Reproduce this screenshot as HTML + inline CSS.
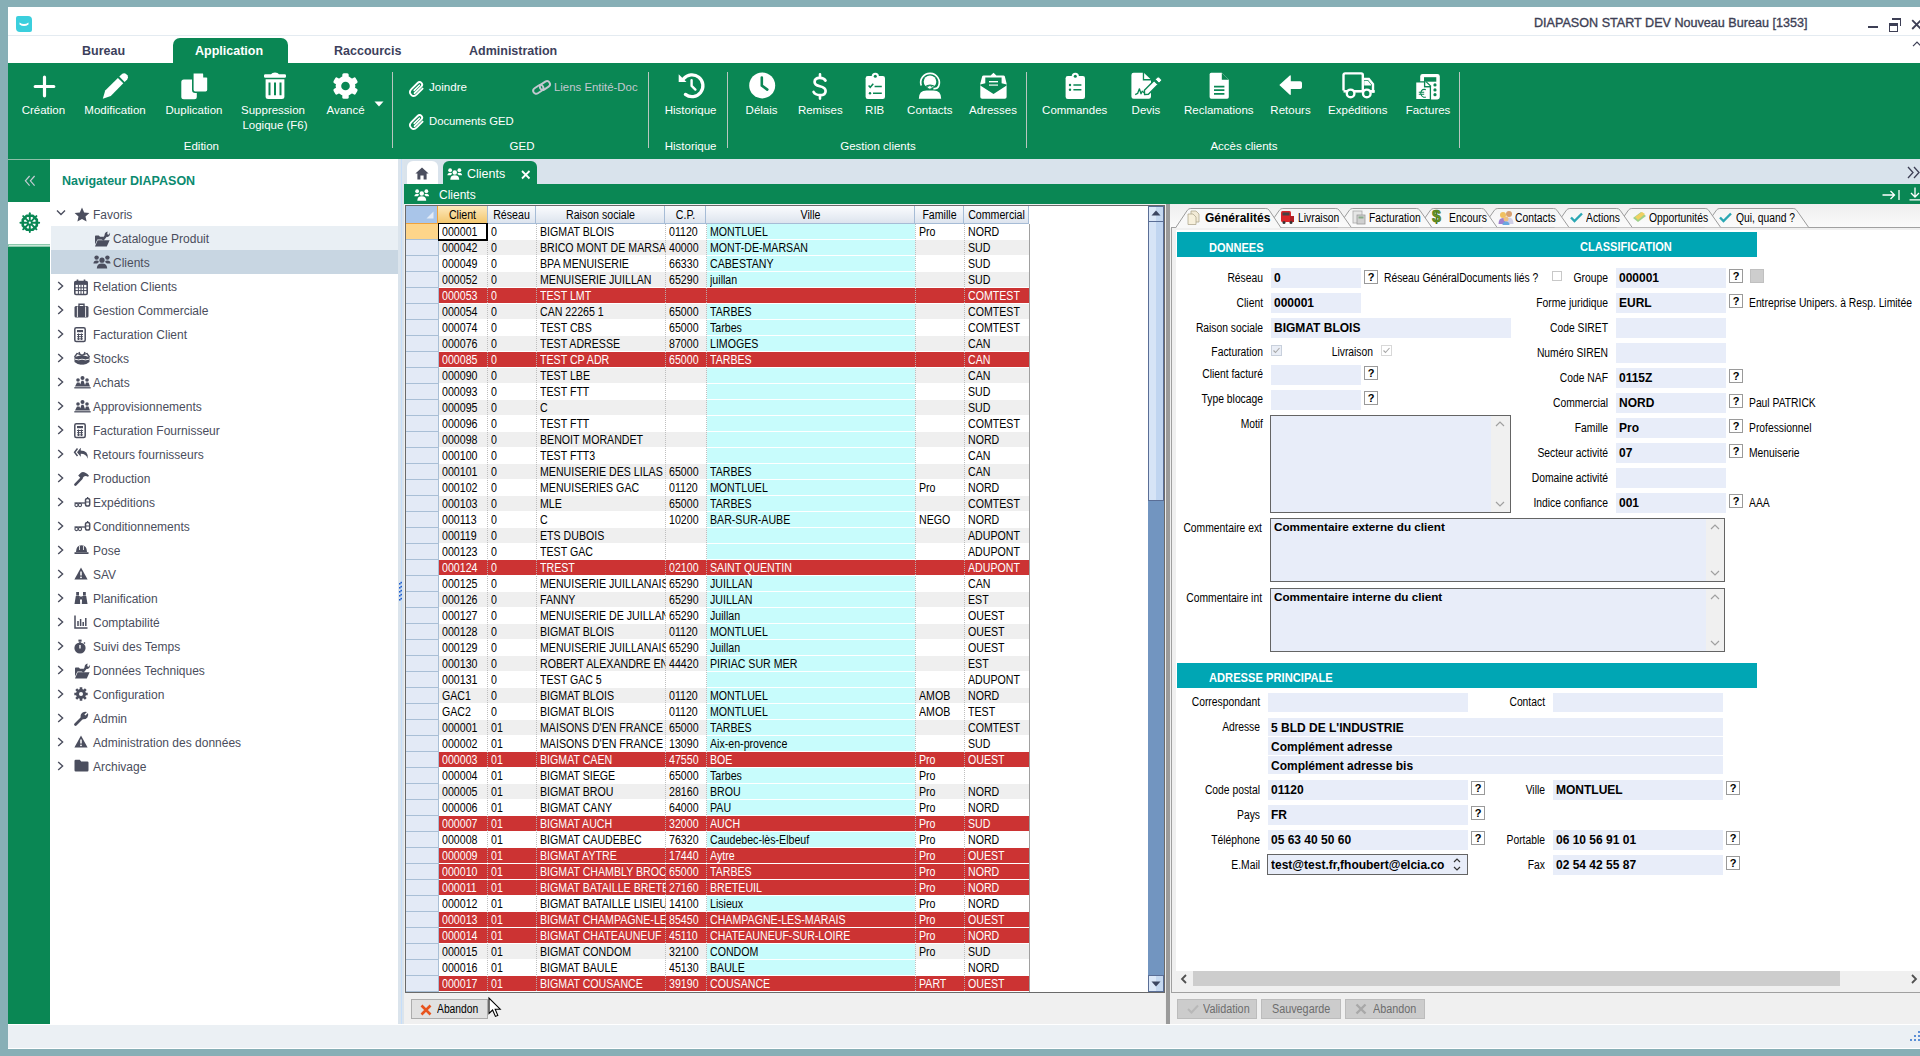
<!DOCTYPE html>
<html><head><meta charset="utf-8"><style>
*{box-sizing:border-box;margin:0;padding:0}
html,body{width:1920px;height:1056px;overflow:hidden;background:#87afb6;font-family:"Liberation Sans",sans-serif}
.a{position:absolute}
.t{position:absolute;white-space:nowrap;line-height:1}
svg{position:absolute;overflow:visible}
.rl{position:absolute;color:#fff;font-size:11.5px;white-space:nowrap;line-height:14px;text-align:center}
.gl{position:absolute;color:#fff;font-size:11.5px;white-space:nowrap;line-height:14px;text-align:center}
.sep{position:absolute;top:72px;width:1px;height:76px;background:#b9c6bf}
.nv{position:absolute;font-size:12px;color:#4a4d5c;white-space:nowrap;line-height:14px}
.g{font-size:12px;color:#000;white-space:nowrap;line-height:16px;transform:scaleX(.86);transform-origin:0 50%}
.gg{transform:scaleX(.885)}
.gr{transform-origin:100% 50%}
.gc{transform-origin:50% 50%}
.gb{font-size:12px;font-weight:bold;color:#000;white-space:nowrap;line-height:16px}
</style></head><body>
<div class="a" style="left:8px;top:7px;width:1912px;height:1042px;background:#fff"></div>
<div class="a" style="left:8px;top:35px;width:1912px;height:1px;background:#e4ebf1"></div>
<div class="a" style="left:16px;top:16px;width:16px;height:16px;background:#3bcfdd;border-radius:2px 4px 2px 4px"></div>
<svg style="left:16px;top:16px" width="16" height="16"><path d="M3.5 6.5 Q8 9.5 12.5 6.5 L12.5 8.5 Q8 11.5 3.5 8.5Z" fill="#fff"/></svg>
<div class="t" style="left:1534px;top:17px;font-size:12.6px;color:#3d3f55;-webkit-text-stroke:0.35px #3d3f55">DIAPASON START DEV Nouveau Bureau [1353]</div>
<div class="a" style="left:1868px;top:26px;width:10px;height:2px;background:#3d3f55"></div>
<div class="a" style="left:1889px;top:23px;width:9px;height:9px;border:1px solid #3d3f55;border-top-width:3px"></div>
<div class="a" style="left:1892px;top:18px;width:9px;height:2px;background:#3d3f55"></div>
<div class="a" style="left:1900px;top:18px;width:1px;height:8px;background:#3d3f55"></div>
<svg style="left:1911px;top:19px" width="12" height="12" viewBox="0 0 12 12"><path d="M1.2 1.2L10 10M10 1.2L1.2 10" stroke="#3d3f55" stroke-width="1.8"/></svg>
<svg style="left:1912px;top:40px" width="10" height="8" viewBox="0 0 10 8"><path d="M1 6.2L5 2L9 6.2" fill="none" stroke="#3d3f55" stroke-width="1.2"/></svg>
<div class="a" style="left:173px;top:38px;width:115px;height:25px;background:#0a8754;border-radius:7px 7px 0 0"></div>
<div class="t" style="left:82px;top:45px;font-size:12.5px;font-weight:bold;color:#3d3f5c">Bureau</div>
<div class="t" style="left:195px;top:45px;font-size:12.5px;font-weight:bold;color:#fff">Application</div>
<div class="t" style="left:334px;top:45px;font-size:12.5px;font-weight:bold;color:#3d3f5c">Raccourcis</div>
<div class="t" style="left:469px;top:45px;font-size:12.5px;font-weight:bold;color:#3d3f5c">Administration</div>
<div class="a" style="left:8px;top:63px;width:1912px;height:96px;background:#0a8754"></div>
<div class="rl" style="left:-16.6px;top:103px;width:120px">Création</div>
<div class="rl" style="left:55.0px;top:103px;width:120px">Modification</div>
<div class="rl" style="left:134.0px;top:103px;width:120px">Duplication</div>
<div class="rl" style="left:285.6px;top:103px;width:120px">Avancé</div>
<div class="rl" style="left:630.6px;top:103px;width:120px">Historique</div>
<div class="rl" style="left:701.6px;top:103px;width:120px">Délais</div>
<div class="rl" style="left:760.3px;top:103px;width:120px">Remises</div>
<div class="rl" style="left:814.7px;top:103px;width:120px">RIB</div>
<div class="rl" style="left:869.8px;top:103px;width:120px">Contacts</div>
<div class="rl" style="left:933.0px;top:103px;width:120px">Adresses</div>
<div class="rl" style="left:1014.7px;top:103px;width:120px">Commandes</div>
<div class="rl" style="left:1086.0px;top:103px;width:120px">Devis</div>
<div class="rl" style="left:1158.8px;top:103px;width:120px">Reclamations</div>
<div class="rl" style="left:1230.5px;top:103px;width:120px">Retours</div>
<div class="rl" style="left:1297.8px;top:103px;width:120px">Expéditions</div>
<div class="rl" style="left:1368.0px;top:103px;width:120px">Factures</div>
<div class="rl" style="left:213px;top:103px;width:120px">Suppression</div>
<div class="rl" style="left:215px;top:118px;width:120px">Logique (F6)</div>
<div class="gl" style="left:141.4px;top:139px;width:120px">Edition</div>
<div class="gl" style="left:462.0px;top:139px;width:120px">GED</div>
<div class="gl" style="left:630.6px;top:139px;width:120px">Historique</div>
<div class="gl" style="left:818.0px;top:139px;width:120px">Gestion clients</div>
<div class="gl" style="left:1184.0px;top:139px;width:120px">Accès clients</div>
<div class="sep" style="left:392px"></div>
<div class="sep" style="left:648px"></div>
<div class="sep" style="left:727px"></div>
<div class="sep" style="left:1026px"></div>
<div class="sep" style="left:1459px"></div>
<div class="t" style="left:429px;top:80px;font-size:11.6px;color:#fff;line-height:14px">Joindre</div>
<div class="t" style="left:429px;top:114px;font-size:11.3px;color:#fff;line-height:14px">Documents GED</div>
<div class="t" style="left:554px;top:80px;font-size:11.4px;color:#c4c8d0;line-height:14px">Liens Entité-Doc</div>
<svg style="left:33px;top:75px" width="23" height="23" viewBox="0 0 23 23"><path d="M11.5 2.2V20.8M2.2 11.5H20.8" stroke="#fff" stroke-width="3.2" stroke-linecap="round"/></svg>
<svg style="left:102px;top:73px" width="27" height="27" viewBox="0 0 27 27"><path d="M0.8 25.8 L3.2 17.6 L15.9 4.9 L21.3 10.3 L8.8 23 Z" fill="#fff"/><path d="M17.3 3.5 L20.3 0.8 Q22.4 -0.6 24.6 1.4 L25.4 2.3 Q26.9 4.2 25.2 6.4 L22.6 9 Z" fill="#fff"/></svg>
<svg style="left:181px;top:72px" width="28" height="28" viewBox="0 0 28 28"><rect x="0.3" y="7.5" width="15.5" height="19.8" rx="2.5" fill="#fff"/><path d="M11.8 0.6 H22.2 L27 5.4 V17.8 Q27 20.2 24.6 20.2 H14.2 Q11.8 20.2 11.8 17.8 Z" fill="#fff" stroke="#0a8754" stroke-width="1.6"/><path d="M22.2 0.6 V5.4 H27" fill="#0a8754"/></svg>
<svg style="left:263px;top:72px" width="24" height="28" viewBox="0 0 24 28"><path d="M1 3.5 Q1 2.2 2.3 2.2 H8 Q9 0.5 12 0.5 Q15 0.5 16 2.2 H21.7 Q23 2.2 23 3.5 V4.6 Q23 5.8 21.7 5.8 H2.3 Q1 5.8 1 4.6Z" fill="#fff"/><path d="M2.6 7.2 H21.4 V24.5 Q21.4 27 18.9 27 H5.1 Q2.6 27 2.6 24.5Z" fill="#fff"/><path d="M6.5 10.5V23.2M12 10.5V23.2M17.5 10.5V23.2" stroke="#0a8754" stroke-width="2"/></svg>
<svg style="left:333px;top:73px" width="26" height="26" viewBox="0 0 26 26"><circle cx="12.5" cy="13" r="9.9" fill="#fff"/><rect x="9.3" y="0.2" width="6.4" height="8" rx="1.6" transform="rotate(0 12.5 13)" fill="#fff"/><rect x="9.3" y="0.2" width="6.4" height="8" rx="1.6" transform="rotate(60 12.5 13)" fill="#fff"/><rect x="9.3" y="0.2" width="6.4" height="8" rx="1.6" transform="rotate(120 12.5 13)" fill="#fff"/><rect x="9.3" y="0.2" width="6.4" height="8" rx="1.6" transform="rotate(180 12.5 13)" fill="#fff"/><rect x="9.3" y="0.2" width="6.4" height="8" rx="1.6" transform="rotate(240 12.5 13)" fill="#fff"/><rect x="9.3" y="0.2" width="6.4" height="8" rx="1.6" transform="rotate(300 12.5 13)" fill="#fff"/><circle cx="12.5" cy="13" r="4.3" fill="#0a8754"/></svg>
<svg style="left:374px;top:101px" width="10" height="6" viewBox="0 0 10 6"><path d="M0.5 0.5H9.5L5 5.5Z" fill="#fff"/></svg>
<svg style="left:409px;top:80px" width="16" height="17" viewBox="0 0 16 17"><path d="M5.6 13.2 L12.2 6.6 Q14.2 4.6 12.4 2.8 Q10.6 1 8.6 3 L2.4 9.2 Q-0.6 12.2 2.2 14.8 Q4.8 17.4 7.8 14.4 L13.6 8.6" fill="none" stroke="#fff" stroke-width="1.9" stroke-linecap="round"/><path d="M5.2 10.4 L10.4 5.2" stroke="#fff" stroke-width="1.6" stroke-linecap="round"/></svg>
<svg style="left:409px;top:113px" width="16" height="17" viewBox="0 0 16 17"><path d="M5.6 13.2 L12.2 6.6 Q14.2 4.6 12.4 2.8 Q10.6 1 8.6 3 L2.4 9.2 Q-0.6 12.2 2.2 14.8 Q4.8 17.4 7.8 14.4 L13.6 8.6" fill="none" stroke="#fff" stroke-width="1.9" stroke-linecap="round"/><path d="M5.2 10.4 L10.4 5.2" stroke="#fff" stroke-width="1.6" stroke-linecap="round"/></svg>
<svg style="left:532px;top:80px" width="20" height="16" viewBox="0 0 20 16"><g fill="none" stroke="#c4c8d0" stroke-width="1.9"><rect x="0.8" y="6.4" width="11" height="6" rx="3" transform="rotate(-34 6.3 9.4)"/><rect x="7.4" y="2.5" width="11" height="6" rx="3" transform="rotate(-34 12.9 5.5)"/></g></svg>
<svg style="left:677px;top:72px" width="28" height="28" viewBox="0 0 28 28"><path d="M6.6 6.8 A10.9 10.9 0 1 1 8.4 22.4" fill="none" stroke="#fff" stroke-width="3.3" stroke-linecap="round"/><path d="M1.7 2.2 L1.7 10 L9.5 10 Z" fill="#fff"/><path d="M14.6 8.2 V13.8 L18.4 17.6" fill="none" stroke="#fff" stroke-width="2.4" stroke-linecap="round" stroke-linejoin="round"/></svg>
<svg style="left:749px;top:72px" width="27" height="27" viewBox="0 0 27 27"><circle cx="13.2" cy="13.4" r="13" fill="#fff"/><path d="M12.8 5.5 V13.6 L18.3 17.6" fill="none" stroke="#0a8754" stroke-width="2.6" stroke-linecap="round"/></svg>
<svg style="left:811px;top:73px" width="18" height="27" viewBox="0 0 18 27"><path d="M14.5 7.6 Q13.2 4.8 8.8 4.8 Q3.6 4.8 3.6 9 Q3.6 12 8.8 13.2 Q14.6 14.5 14.6 17.9 Q14.6 22.1 9 22.1 Q4.2 22.1 2.6 19" fill="none" stroke="#fff" stroke-width="2.7" stroke-linecap="round"/><path d="M9 1.2V4.6M9 22.4V25.6" stroke="#fff" stroke-width="2.6" stroke-linecap="round"/></svg>
<svg style="left:865px;top:72px" width="21" height="28" viewBox="0 0 21 28"><rect x="0.6" y="4" width="19.4" height="23" rx="2.2" fill="#fff"/><circle cx="10.3" cy="4.3" r="3.6" fill="#fff"/><circle cx="10.3" cy="4.2" r="1.5" fill="#0a8754"/><path d="M3.6 13.6 L5.2 15.3 L8.3 11.8" fill="none" stroke="#0a8754" stroke-width="1.5"/><path d="M9.6 14.5 H16.8 M8 21.2 H16.8" stroke="#0a8754" stroke-width="1.6"/><circle cx="5" cy="21.2" r="1.2" fill="#0a8754"/></svg>
<svg style="left:918px;top:72px" width="24" height="28" viewBox="0 0 24 28"><path d="M3.2 13.6 A9.3 9.3 0 1 1 20.6 14.2 Q19.4 17.2 15.4 16.6" fill="none" stroke="#fff" stroke-width="1.7"/><circle cx="12" cy="9.8" r="6.3" fill="#fff"/><path d="M7.2 14.8 Q12 11.6 16.8 14.6" fill="none" stroke="#0a8754" stroke-width="1.3"/><ellipse cx="11.8" cy="15.4" rx="2.4" ry="1.8" fill="#fff" stroke="#0a8754" stroke-width="1"/><path d="M0.8 26.8 Q0.8 18.4 8.5 18.4 H15.5 Q23.2 18.4 23.2 26.8 Z" fill="#fff"/></svg>
<svg style="left:979px;top:72px" width="29" height="28" viewBox="0 0 29 28"><path d="M1.3 11.5 L3.2 4.2 Q3.6 3.5 4.5 3.5 H11.6 L14.5 0.8 L17.4 3.5 H24.5 Q25.4 3.5 25.8 4.2 L27.6 11.5 V25 Q27.6 26.8 25.8 26.8 H3.1 Q1.3 26.8 1.3 25 Z" fill="#fff"/><path d="M6.3 5.6 H22.6 V11.2 L27.6 12.6 V13.4 L14.5 22 L1.3 13.4 V12.6 L6.3 11.2 Z" fill="#0a8754"/><path d="M3 12.2 L6.3 9.6 M26 12.2 L22.6 9.6" stroke="#fff" stroke-width="0"/><rect x="10" y="9" width="9" height="1.4" fill="#fff"/><rect x="10" y="12.4" width="9" height="1.4" fill="#d8ebe2"/></svg>
<svg style="left:1065px;top:72px" width="21" height="28" viewBox="0 0 21 28"><rect x="0.6" y="4" width="19.4" height="23" rx="2.2" fill="#fff"/><circle cx="10.3" cy="4.3" r="3.6" fill="#fff"/><circle cx="10.3" cy="4.2" r="1.5" fill="#0a8754"/><circle cx="5" cy="13" r="1.2" fill="#0a8754"/><circle cx="5" cy="17.8" r="1.2" fill="#0a8754"/><path d="M8.4 13 H16.4 M8.4 17.8 H16.4" stroke="#0a8754" stroke-width="1.6"/></svg>
<svg style="left:1131px;top:72px" width="32" height="28" viewBox="0 0 32 28"><path d="M0.4 3 Q0.4 0.8 2.6 0.8 H11.8 V8.6 H20 V24.6 Q20 26.8 17.8 26.8 H2.6 Q0.4 26.8 0.4 24.6 Z" fill="#fff"/><path d="M13.1 1 L19.4 7.1 H13.1 Z" fill="#fff"/><path d="M4.2 22.6 L6.6 21.4 L8.4 16.8 L10 21.8 L11.2 19.2 L12.6 20.2 L14.4 21.8" fill="none" stroke="#0a8754" stroke-width="1.3" stroke-linejoin="round"/><path d="M13.4 18.3 L23.1 8.6 L27.1 12.6 L17.4 22.3 L13.6 22.6 Z" fill="#fff" stroke="#0a8754" stroke-width="1.4" stroke-linejoin="round"/><path d="M24.2 7.4 L26.4 5.2 Q27.2 4.4 28 5.2 L30.2 7.4 Q31 8.2 30.2 9 L28 11.2 Z" fill="#fff" stroke="#0a8754" stroke-width="1"/></svg>
<svg style="left:1209px;top:72px" width="21" height="28" viewBox="0 0 21 28"><path d="M0.6 2.4 Q0.6 0.8 2.2 0.8 H12.8 L19.8 7.8 V25 Q19.8 26.7 18.2 26.7 H2.2 Q0.6 26.7 0.6 25Z" fill="#fff"/><path d="M12.8 0.8 V7.8 H19.8" fill="#0a8754"/><path d="M5 14.6 H15.4 M5 18.2 H15.4 M5 21.8 H15.4" stroke="#0a8754" stroke-width="1.7"/></svg>
<svg style="left:1279px;top:75px" width="24" height="21" viewBox="0 0 24 21"><path d="M0.3 10 L10.8 0.4 Q11.8 -0.4 11.8 1.2 V6.3 H21.2 Q23 6.3 23 8 V12.3 Q23 14 21.2 14 H11.8 V19 Q11.8 20.6 10.8 19.8 Z" fill="#fff"/></svg>
<svg style="left:1342px;top:72px" width="34" height="28" viewBox="0 0 34 28"><path d="M1.5 18.5 V3 Q1.5 1.4 3.1 1.4 H19.2 Q20.8 1.4 20.8 3 V18.5" fill="none" stroke="#fff" stroke-width="2.4"/><path d="M20.8 7 H26.8 L31 12.2 V19.5 H32.6" fill="none" stroke="#fff" stroke-width="2.4"/><path d="M22.2 9 H26 L29 12.6 V13.6 H22.2Z" fill="#fff"/><path d="M1.5 18 H32.5 V20.6 H1.5Z" fill="#fff"/><circle cx="8.6" cy="21.4" r="3.8" fill="#0a8754" stroke="#fff" stroke-width="2.4"/><circle cx="24.8" cy="21.4" r="3.8" fill="#0a8754" stroke="#fff" stroke-width="2.4"/></svg>
<svg style="left:1415px;top:73px" width="26" height="28" viewBox="0 0 26 28"><rect x="5.2" y="1" width="19.6" height="25.5" rx="2.4" fill="#fff"/><rect x="9" y="4.2" width="12.3" height="4.5" fill="#0a8754"/><path d="M0.6 8.9 H9.6 V13.6 H15.4 V26.7 H0.6 Z" fill="#fff" stroke="#0a8754" stroke-width="1.3"/><path d="M10.3 9.4 L14.6 13 H10.3 Z" fill="#fff"/><path d="M11 8.6 L16 13.4" stroke="#0a8754" stroke-width="1.3"/><path d="M9.6 8.4 V13.6 H15.6" fill="none" stroke="#0a8754" stroke-width="1.2"/><circle cx="20" cy="11.9" r="1.6" fill="#0a8754"/><circle cx="20" cy="16.9" r="1.6" fill="#0a8754"/><circle cx="20" cy="21.7" r="1.6" fill="#0a8754"/><path d="M10.8 16.6 Q8 15.8 6.6 17.6 Q5.4 19.4 5.8 21.2 Q6.4 23.6 8.6 24.2 Q9.8 24.5 10.8 24 M3.8 19.2 H9.2 M3.8 21.2 H9.2" fill="none" stroke="#0a8754" stroke-width="1.1"/></svg>
<div class="a" style="left:8px;top:159px;width:42px;height:865px;background:#0a8754"></div>
<div class="a" style="left:8px;top:159px;width:42px;height:1px;background:#8fbfa8"></div>
<div class="a" style="left:8px;top:202px;width:42px;height:42px;background:#fff"></div>
<div class="a" style="left:8px;top:244px;width:42px;height:3px;background:#8cc8ac"></div>
<div class="a" style="left:9px;top:245px;width:41px;height:1px;background:#c8e8d8"></div>
<svg style="left:24px;top:175px" width="12" height="12" viewBox="0 0 12 12"><path d="M5.6 1 L1.4 5.8 L5.6 10.6 M10.6 1 L6.4 5.8 L10.6 10.6" fill="none" stroke="#c5ccd4" stroke-width="1.2"/></svg>
<svg style="left:19px;top:212px" width="21" height="21" viewBox="0 0 21 21"><polygon points="17.82,13.61 13.71,17.72 7.89,17.72 3.78,13.61 3.78,7.79 7.89,3.68 13.71,3.68 17.82,7.79" fill="none" stroke="#0a8754" stroke-width="2.6" stroke-linejoin="round"/><path d="M12.30 10.70 L20.20 10.70" stroke="#0a8754" stroke-width="1.9" stroke-linecap="round"/><path d="M11.86 11.76 L17.45 17.35" stroke="#0a8754" stroke-width="1.9" stroke-linecap="round"/><path d="M10.80 12.20 L10.80 20.10" stroke="#0a8754" stroke-width="1.9" stroke-linecap="round"/><path d="M9.74 11.76 L4.15 17.35" stroke="#0a8754" stroke-width="1.9" stroke-linecap="round"/><path d="M9.30 10.70 L1.40 10.70" stroke="#0a8754" stroke-width="1.9" stroke-linecap="round"/><path d="M9.74 9.64 L4.15 4.05" stroke="#0a8754" stroke-width="1.9" stroke-linecap="round"/><path d="M10.80 9.20 L10.80 1.30" stroke="#0a8754" stroke-width="1.9" stroke-linecap="round"/><path d="M11.86 9.64 L17.45 4.05" stroke="#0a8754" stroke-width="1.9" stroke-linecap="round"/><circle cx="10.8" cy="10.7" r="2.8" fill="#0a8754"/><circle cx="10.8" cy="10.7" r="1.1" fill="#fff"/></svg>
<div class="t" style="left:62px;top:174px;font-size:12.5px;font-weight:bold;color:#0b8a70;line-height:14px">Navigateur DIAPASON</div>
<div class="a" style="left:51px;top:226px;width:347px;height:24px;background:#e9eff4"></div>
<div class="a" style="left:51px;top:250px;width:347px;height:24px;background:#c8d6e2"></div>
<svg style="left:74px;top:207px" width="16" height="16" viewBox="0 0 16 16"><path d="M8 0.6 L10.2 5.4 L15.4 5.9 L11.5 9.4 L12.6 14.6 L8 12 L3.4 14.6 L4.5 9.4 L0.6 5.9 L5.8 5.4Z" fill="#4b4e5e"/></svg>
<svg style="left:56px;top:209px" width="10" height="8" viewBox="0 0 10 8"><path d="M1 1.5 L5 5.5 L9 1.5" fill="none" stroke="#4b4e5e" stroke-width="1.4"/></svg>
<div class="nv" style="left:93px;top:208px">Favoris</div>
<svg style="left:94px;top:231px" width="17" height="16" viewBox="0 0 17 16"><path d="M1 5.4 Q1 4.6 1.8 4.6 H4.8 L6 5.8 H9.6 V8.4 H3.4 L1 13.6 Z" fill="#4b4e5e"/><path d="M3.6 9.2 H15.6 L12.8 15.4 H1 Z" fill="#4b4e5e"/><path d="M8.6 9 L12.2 4.6" stroke="#4b4e5e" stroke-width="2.4"/><path d="M10.8 5.2 Q10 2.4 12.4 1 L13.6 0.4 L13.2 3.2 L15 3.8 L16 1.6 Q16.6 4.8 13.6 6 Z" fill="#4b4e5e"/></svg>
<div class="nv" style="left:113px;top:232px">Catalogue Produit</div>
<svg style="left:93px;top:255px" width="18" height="14" viewBox="0 0 18 14"><circle cx="3.6" cy="2.6" r="2.2" fill="#4b4e5e"/><circle cx="14.4" cy="2.6" r="2.2" fill="#4b4e5e"/><circle cx="9" cy="5.2" r="2.6" fill="#4b4e5e"/><path d="M0.4 8.6 Q0.6 5.6 3.6 5.6 Q5.6 5.6 6 7 Q4.2 8.2 4.2 8.6Z M17.6 8.6 Q17.4 5.6 14.4 5.6 Q12.4 5.6 12 7 Q13.8 8.2 13.8 8.6Z" fill="#4b4e5e"/><path d="M3.8 13.6 Q3.8 8.4 9 8.4 Q14.2 8.4 14.2 13.6Z" fill="#4b4e5e"/></svg>
<div class="nv" style="left:113px;top:256px">Clients</div>
<svg style="left:74px;top:279px" width="14" height="16" viewBox="0 0 14 16"><rect x="0.8" y="2.5" width="12.4" height="13" rx="1.2" fill="none" stroke="#4b4e5e" stroke-width="1.6"/><rect x="0.8" y="2.5" width="12.4" height="3.4" fill="#4b4e5e"/><path d="M3.5 0.5V3.5M10.5 0.5V3.5" stroke="#4b4e5e" stroke-width="1.6"/><path d="M1 8.8H13M1 11.6H13M4.4 6V15.5M7 6V15.5M9.6 6V15.5" stroke="#4b4e5e" stroke-width="1"/></svg>
<svg style="left:57px;top:281px" width="8" height="10" viewBox="0 0 8 10"><path d="M1.2 1 L5.6 5 L1.2 9" fill="none" stroke="#4b4e5e" stroke-width="1.4"/></svg>
<div class="nv" style="left:93px;top:280px">Relation Clients</div>
<svg style="left:74px;top:303px" width="15" height="15" viewBox="0 0 15 15"><rect x="0.5" y="3" width="14" height="11.5" rx="1.5" fill="#4b4e5e"/><path d="M5 3V1.2H10V3" fill="none" stroke="#4b4e5e" stroke-width="1.4"/><path d="M3.4 3.5V14M11.6 3.5V14" stroke="#fff" stroke-width="0.9"/></svg>
<svg style="left:57px;top:305px" width="8" height="10" viewBox="0 0 8 10"><path d="M1.2 1 L5.6 5 L1.2 9" fill="none" stroke="#4b4e5e" stroke-width="1.4"/></svg>
<div class="nv" style="left:93px;top:304px">Gestion Commerciale</div>
<svg style="left:74px;top:327px" width="12" height="15" viewBox="0 0 12 15"><rect x="0.8" y="0.8" width="10.4" height="13.6" rx="1.5" fill="none" stroke="#4b4e5e" stroke-width="1.5"/><rect x="3" y="3" width="6" height="2.2" fill="#4b4e5e"/><path d="M3 7.5H9M3 9.7H9M3 11.9H9M4.5 6.5V13M7.5 6.5V13" stroke="#4b4e5e" stroke-width="1"/></svg>
<svg style="left:57px;top:329px" width="8" height="10" viewBox="0 0 8 10"><path d="M1.2 1 L5.6 5 L1.2 9" fill="none" stroke="#4b4e5e" stroke-width="1.4"/></svg>
<div class="nv" style="left:93px;top:328px">Facturation Client</div>
<svg style="left:74px;top:351px" width="16" height="14" viewBox="0 0 16 14"><path d="M0.5 6 L8 4 L15.5 6 L15.5 11 Q12 14 8 13.6 Q4 14 0.5 11Z" fill="#4b4e5e"/><path d="M0.5 6 L3 2.5 L8 4 L13 2.5 L15.5 6" fill="none" stroke="#4b4e5e" stroke-width="1.3"/><path d="M5 1 L6 3.5 M11 1 L10 3.5" stroke="#4b4e5e" stroke-width="1.4"/><path d="M1 8.2 Q4.5 9.5 8 8.2 Q11.5 9.5 15 8.2" stroke="#fff" stroke-width="0.9" fill="none"/></svg>
<svg style="left:57px;top:353px" width="8" height="10" viewBox="0 0 8 10"><path d="M1.2 1 L5.6 5 L1.2 9" fill="none" stroke="#4b4e5e" stroke-width="1.4"/></svg>
<div class="nv" style="left:93px;top:352px">Stocks</div>
<svg style="left:74px;top:375px" width="17" height="14" viewBox="0 0 17 14"><circle cx="4" cy="5" r="1.8" fill="#4b4e5e"/><circle cx="8.5" cy="3" r="2" fill="#4b4e5e"/><circle cx="13" cy="5" r="1.8" fill="#4b4e5e"/><path d="M1 11.5 L3 7.5 L5.5 7.5 L7 11.5Z M5.5 11.5 L7.5 5.8 L9.5 5.8 L11.5 11.5Z M10.5 11.5 L12 7.5 L14.5 7.5 L16 11.5Z" fill="#4b4e5e"/><path d="M0.3 12.8H16.7" stroke="#4b4e5e" stroke-width="1.3"/></svg>
<svg style="left:57px;top:377px" width="8" height="10" viewBox="0 0 8 10"><path d="M1.2 1 L5.6 5 L1.2 9" fill="none" stroke="#4b4e5e" stroke-width="1.4"/></svg>
<div class="nv" style="left:93px;top:376px">Achats</div>
<svg style="left:74px;top:399px" width="17" height="14" viewBox="0 0 17 14"><circle cx="4" cy="5" r="1.8" fill="#4b4e5e"/><circle cx="8.5" cy="3" r="2" fill="#4b4e5e"/><circle cx="13" cy="5" r="1.8" fill="#4b4e5e"/><path d="M1 11.5 L3 7.5 L5.5 7.5 L7 11.5Z M5.5 11.5 L7.5 5.8 L9.5 5.8 L11.5 11.5Z M10.5 11.5 L12 7.5 L14.5 7.5 L16 11.5Z" fill="#4b4e5e"/><path d="M0.3 12.8H16.7" stroke="#4b4e5e" stroke-width="1.3"/></svg>
<svg style="left:57px;top:401px" width="8" height="10" viewBox="0 0 8 10"><path d="M1.2 1 L5.6 5 L1.2 9" fill="none" stroke="#4b4e5e" stroke-width="1.4"/></svg>
<div class="nv" style="left:93px;top:400px">Approvisionnements</div>
<svg style="left:74px;top:423px" width="12" height="15" viewBox="0 0 12 15"><rect x="0.8" y="0.8" width="10.4" height="13.6" rx="1.5" fill="none" stroke="#4b4e5e" stroke-width="1.5"/><rect x="3" y="3" width="6" height="2.2" fill="#4b4e5e"/><path d="M3 7.5H9M3 9.7H9M3 11.9H9M4.5 6.5V13M7.5 6.5V13" stroke="#4b4e5e" stroke-width="1"/></svg>
<svg style="left:57px;top:425px" width="8" height="10" viewBox="0 0 8 10"><path d="M1.2 1 L5.6 5 L1.2 9" fill="none" stroke="#4b4e5e" stroke-width="1.4"/></svg>
<div class="nv" style="left:93px;top:424px">Facturation Fournisseur</div>
<svg style="left:74px;top:447px" width="16" height="14" viewBox="0 0 16 14"><path d="M3.5 1.5 L0.6 5.2 L3.5 9" fill="none" stroke="#4b4e5e" stroke-width="1.5"/><path d="M6.5 1 L3 5.2 L6.5 9.4 V6.8 Q12 6.6 13.8 11.8 Q14.6 3.6 6.5 3.6Z" fill="#4b4e5e"/><path d="M6.5 1V9.4" stroke="#4b4e5e" stroke-width="0.5"/></svg>
<svg style="left:57px;top:449px" width="8" height="10" viewBox="0 0 8 10"><path d="M1.2 1 L5.6 5 L1.2 9" fill="none" stroke="#4b4e5e" stroke-width="1.4"/></svg>
<div class="nv" style="left:93px;top:448px">Retours fournisseurs</div>
<svg style="left:74px;top:471px" width="16" height="15" viewBox="0 0 16 15"><path d="M1.4 13.6 L7.4 7.4" stroke="#4b4e5e" stroke-width="2.6" stroke-linecap="round"/><path d="M4.2 4.6 L7.2 1.4 Q10.8 0 15 4.8 L14 5.8 Q11.6 4.4 10 5.6 L7.6 8.2 Z" fill="#4b4e5e"/></svg>
<svg style="left:57px;top:473px" width="8" height="10" viewBox="0 0 8 10"><path d="M1.2 1 L5.6 5 L1.2 9" fill="none" stroke="#4b4e5e" stroke-width="1.4"/></svg>
<div class="nv" style="left:93px;top:472px">Production</div>
<svg style="left:74px;top:495px" width="17" height="12" viewBox="0 0 17 12"><path d="M0.5 8 H11" stroke="#4b4e5e" stroke-width="1.3"/><circle cx="2.5" cy="10" r="1.6" fill="none" stroke="#4b4e5e" stroke-width="1.1"/><circle cx="6" cy="10" r="1.6" fill="none" stroke="#4b4e5e" stroke-width="1.1"/><rect x="11.5" y="3.5" width="4.2" height="7.5" rx="1.8" fill="none" stroke="#4b4e5e" stroke-width="1.5"/><path d="M11.5 7H15.7M13.6 2V3.5" stroke="#4b4e5e" stroke-width="1.2"/></svg>
<svg style="left:57px;top:497px" width="8" height="10" viewBox="0 0 8 10"><path d="M1.2 1 L5.6 5 L1.2 9" fill="none" stroke="#4b4e5e" stroke-width="1.4"/></svg>
<div class="nv" style="left:93px;top:496px">Expéditions</div>
<svg style="left:74px;top:519px" width="17" height="12" viewBox="0 0 17 12"><path d="M0.5 8 H11" stroke="#4b4e5e" stroke-width="1.3"/><circle cx="2.5" cy="10" r="1.6" fill="none" stroke="#4b4e5e" stroke-width="1.1"/><circle cx="6" cy="10" r="1.6" fill="none" stroke="#4b4e5e" stroke-width="1.1"/><rect x="11.5" y="3.5" width="4.2" height="7.5" rx="1.8" fill="none" stroke="#4b4e5e" stroke-width="1.5"/><path d="M11.5 7H15.7M13.6 2V3.5" stroke="#4b4e5e" stroke-width="1.2"/></svg>
<svg style="left:57px;top:521px" width="8" height="10" viewBox="0 0 8 10"><path d="M1.2 1 L5.6 5 L1.2 9" fill="none" stroke="#4b4e5e" stroke-width="1.4"/></svg>
<div class="nv" style="left:93px;top:520px">Conditionnements</div>
<svg style="left:74px;top:543px" width="15" height="13" viewBox="0 0 15 13"><path d="M2 9 Q2 2.5 7.5 2.2 Q13 2.5 13 9Z" fill="#4b4e5e"/><path d="M0.5 9.2 H14.5 V11 H0.5Z" fill="#4b4e5e"/><path d="M5.5 3V7M9.5 3V7" stroke="#fff" stroke-width="0.8"/></svg>
<svg style="left:57px;top:545px" width="8" height="10" viewBox="0 0 8 10"><path d="M1.2 1 L5.6 5 L1.2 9" fill="none" stroke="#4b4e5e" stroke-width="1.4"/></svg>
<div class="nv" style="left:93px;top:544px">Pose</div>
<svg style="left:74px;top:567px" width="14" height="13" viewBox="0 0 14 13"><path d="M7 0.5 L13.6 12.4 H0.4Z" fill="#4b4e5e"/><path d="M7 4.5V8.5" stroke="#fff" stroke-width="1.5"/><circle cx="7" cy="10.3" r="0.9" fill="#fff"/></svg>
<svg style="left:57px;top:569px" width="8" height="10" viewBox="0 0 8 10"><path d="M1.2 1 L5.6 5 L1.2 9" fill="none" stroke="#4b4e5e" stroke-width="1.4"/></svg>
<div class="nv" style="left:93px;top:568px">SAV</div>
<svg style="left:74px;top:591px" width="14" height="14" viewBox="0 0 14 14"><path d="M0.5 13 L1.8 5 L5.8 5 L6.2 13Z M7.8 13 L8.2 5 L12.2 5 L13.5 13Z" fill="#4b4e5e"/><rect x="2.2" y="1" width="2.8" height="3.6" fill="#4b4e5e"/><rect x="9" y="1" width="2.8" height="3.6" fill="#4b4e5e"/><rect x="6" y="5.5" width="2" height="3" fill="#4b4e5e"/></svg>
<svg style="left:57px;top:593px" width="8" height="10" viewBox="0 0 8 10"><path d="M1.2 1 L5.6 5 L1.2 9" fill="none" stroke="#4b4e5e" stroke-width="1.4"/></svg>
<div class="nv" style="left:93px;top:592px">Planification</div>
<svg style="left:74px;top:615px" width="14" height="14" viewBox="0 0 14 14"><path d="M1 0.5V13H13.5" fill="none" stroke="#4b4e5e" stroke-width="1.5"/><path d="M4 11V6M6.6 11V4M9.2 11V7M11.8 11V3" stroke="#4b4e5e" stroke-width="1.5"/></svg>
<svg style="left:57px;top:617px" width="8" height="10" viewBox="0 0 8 10"><path d="M1.2 1 L5.6 5 L1.2 9" fill="none" stroke="#4b4e5e" stroke-width="1.4"/></svg>
<div class="nv" style="left:93px;top:616px">Comptabilité</div>
<svg style="left:74px;top:639px" width="12" height="15" viewBox="0 0 12 15"><circle cx="6" cy="9" r="5.6" fill="#4b4e5e"/><rect x="4.4" y="0.6" width="3.2" height="2" fill="#4b4e5e"/><path d="M6 2.4V4M10 3.6L11 4.6" stroke="#4b4e5e" stroke-width="1.4"/><path d="M6 6V9.4" stroke="#fff" stroke-width="1.4"/></svg>
<svg style="left:57px;top:641px" width="8" height="10" viewBox="0 0 8 10"><path d="M1.2 1 L5.6 5 L1.2 9" fill="none" stroke="#4b4e5e" stroke-width="1.4"/></svg>
<div class="nv" style="left:93px;top:640px">Suivi des Temps</div>
<svg style="left:74px;top:663px" width="17" height="16" viewBox="0 0 17 16"><path d="M1 5.4 Q1 4.6 1.8 4.6 H4.8 L6 5.8 H9.6 V8.4 H3.4 L1 13.6 Z" fill="#4b4e5e"/><path d="M3.6 9.2 H15.6 L12.8 15.4 H1 Z" fill="#4b4e5e"/><path d="M8.6 9 L12.2 4.6" stroke="#4b4e5e" stroke-width="2.4"/><path d="M10.8 5.2 Q10 2.4 12.4 1 L13.6 0.4 L13.2 3.2 L15 3.8 L16 1.6 Q16.6 4.8 13.6 6 Z" fill="#4b4e5e"/></svg>
<svg style="left:57px;top:665px" width="8" height="10" viewBox="0 0 8 10"><path d="M1.2 1 L5.6 5 L1.2 9" fill="none" stroke="#4b4e5e" stroke-width="1.4"/></svg>
<div class="nv" style="left:93px;top:664px">Données Techniques</div>
<svg style="left:74px;top:687px" width="14" height="14" viewBox="0 0 14 14"><circle cx="7" cy="7" r="5" fill="#4b4e5e"/><path d="M7 0.3V13.7M0.3 7H13.7M2.2 2.2L11.8 11.8M11.8 2.2L2.2 11.8" stroke="#4b4e5e" stroke-width="2.6"/><circle cx="7" cy="7" r="2" fill="#fff"/></svg>
<svg style="left:57px;top:689px" width="8" height="10" viewBox="0 0 8 10"><path d="M1.2 1 L5.6 5 L1.2 9" fill="none" stroke="#4b4e5e" stroke-width="1.4"/></svg>
<div class="nv" style="left:93px;top:688px">Configuration</div>
<svg style="left:74px;top:711px" width="15" height="15" viewBox="0 0 15 15"><path d="M1.5 13.5 L8 7" stroke="#4b4e5e" stroke-width="2.8" stroke-linecap="round"/><path d="M7 7.5 Q5.6 3.5 8.6 1.4 Q10.8 0.2 13 1 L10.4 3.6 L11.4 4.6 L14 2 Q14.8 4.4 13.4 6.4 Q11.2 9 7.6 8Z" fill="#4b4e5e"/></svg>
<svg style="left:57px;top:713px" width="8" height="10" viewBox="0 0 8 10"><path d="M1.2 1 L5.6 5 L1.2 9" fill="none" stroke="#4b4e5e" stroke-width="1.4"/></svg>
<div class="nv" style="left:93px;top:712px">Admin</div>
<svg style="left:74px;top:735px" width="14" height="13" viewBox="0 0 14 13"><path d="M7 0.5 L13.6 12.4 H0.4Z" fill="#4b4e5e"/><path d="M7 4.5V8.5" stroke="#fff" stroke-width="1.5"/><circle cx="7" cy="10.3" r="0.9" fill="#fff"/></svg>
<svg style="left:57px;top:737px" width="8" height="10" viewBox="0 0 8 10"><path d="M1.2 1 L5.6 5 L1.2 9" fill="none" stroke="#4b4e5e" stroke-width="1.4"/></svg>
<div class="nv" style="left:93px;top:736px">Administration des données</div>
<svg style="left:74px;top:759px" width="15" height="13" viewBox="0 0 15 13"><path d="M0.5 2 Q0.5 0.8 1.7 0.8 H5.8 L7.2 2.4 H13.3 Q14.5 2.4 14.5 3.6 V11.3 Q14.5 12.5 13.3 12.5 H1.7 Q0.5 12.5 0.5 11.3Z" fill="#4b4e5e"/></svg>
<svg style="left:57px;top:761px" width="8" height="10" viewBox="0 0 8 10"><path d="M1.2 1 L5.6 5 L1.2 9" fill="none" stroke="#4b4e5e" stroke-width="1.4"/></svg>
<div class="nv" style="left:93px;top:760px">Archivage</div>
<div class="a" style="left:398px;top:159px;width:6px;height:865px;background:#dbe4ec"></div>
<div class="a" style="left:401px;top:159px;width:1px;height:865px;background:#c6defa"></div>
<div class="a" style="left:404px;top:159px;width:1516px;height:25px;background:#d9e3ec"></div>
<div class="a" style="left:407px;top:161px;width:31px;height:23px;background:#fff;border-radius:6px 6px 0 0"></div>
<svg style="left:415px;top:167px" width="14" height="13" viewBox="0 0 14 13"><path d="M7 0.5 L13.6 6.6 H11.6 V12.4 H8.6 V8.6 H5.4 V12.4 H2.4 V6.6 H0.4Z" fill="#4b4e5e"/></svg>
<div class="a" style="left:443px;top:161px;width:94px;height:23px;background:#0a8754;border-radius:6px 6px 0 0"></div>
<svg style="left:447px;top:168px" width="15.5" height="12" viewBox="0 0 18 14"><circle cx="3.6" cy="2.6" r="2.2" fill="#fff"/><circle cx="14.4" cy="2.6" r="2.2" fill="#fff"/><circle cx="9" cy="5.2" r="2.6" fill="#fff"/><path d="M0.4 8.6 Q0.6 5.6 3.6 5.6 Q5.6 5.6 6 7 Q4.2 8.2 4.2 8.6Z M17.6 8.6 Q17.4 5.6 14.4 5.6 Q12.4 5.6 12 7 Q13.8 8.2 13.8 8.6Z" fill="#fff"/><path d="M3.8 13.6 Q3.8 8.4 9 8.4 Q14.2 8.4 14.2 13.6Z" fill="#fff"/></svg>
<div class="t" style="left:467px;top:167px;font-size:12.5px;color:#fff;line-height:14px">Clients</div>
<svg style="left:521px;top:170px" width="10" height="10" viewBox="0 0 10 10"><path d="M1 1L8.5 8.5M8.5 1L1 8.5" stroke="#fff" stroke-width="1.8"/></svg>
<svg style="left:1907px;top:166px" width="14" height="13" viewBox="0 0 14 13"><path d="M1 1 L6 6.5 L1 12 M7 1 L12 6.5 L7 12" fill="none" stroke="#3d3f55" stroke-width="1.3"/></svg>
<div class="a" style="left:404px;top:184px;width:1516px;height:20px;background:#0a8754"></div>
<svg style="left:414px;top:189px" width="15.5" height="12" viewBox="0 0 18 14"><circle cx="3.6" cy="2.6" r="2.2" fill="#fff"/><circle cx="14.4" cy="2.6" r="2.2" fill="#fff"/><circle cx="9" cy="5.2" r="2.6" fill="#fff"/><path d="M0.4 8.6 Q0.6 5.6 3.6 5.6 Q5.6 5.6 6 7 Q4.2 8.2 4.2 8.6Z M17.6 8.6 Q17.4 5.6 14.4 5.6 Q12.4 5.6 12 7 Q13.8 8.2 13.8 8.6Z" fill="#fff"/><path d="M3.8 13.6 Q3.8 8.4 9 8.4 Q14.2 8.4 14.2 13.6Z" fill="#fff"/></svg>
<div class="t" style="left:439px;top:188px;font-size:12px;color:#fff;line-height:14px">Clients</div>
<svg style="left:1882px;top:189px" width="20" height="12" viewBox="0 0 20 12"><path d="M0.5 6H12.5M8.5 2L12.5 6L8.5 10M17 1V11" fill="none" stroke="#fff" stroke-width="1.3"/></svg>
<svg style="left:1909px;top:187px" width="12" height="14" viewBox="0 0 12 14"><path d="M6 0.5V10M2 6L6 10L10 6M0.5 12.8H11.5" fill="none" stroke="#fff" stroke-width="1.3"/></svg>
<div class="a" style="left:404px;top:204px;width:762px;height:820px;background:#f0f0f0"></div>
<div class="a" style="left:405px;top:205px;width:760px;height:788px;background:#fff;border:1px solid #6a6a6a"></div>
<div class="a" style="left:406px;top:206px;width:623px;height:18px;background:linear-gradient(#fbfcfe,#dde4ee);border-bottom:1px solid #a6bcd6"></div>
<div class="a" style="left:406px;top:206px;width:32px;height:18px;background:#a9c5e9;border-bottom:1px solid #f0a23a"></div>
<svg style="left:426px;top:211px" width="8" height="8" viewBox="0 0 8 8"><path d="M7.5 0.5V7.5H0.5Z" fill="#e4ebf6"/></svg>
<div class="a" style="left:438px;top:206px;width:49px;height:18px;background:linear-gradient(#fde9bd,#f3c76f);border-bottom:1px solid #f0a23a"></div>
<div class="a" style="left:487px;top:206px;width:1px;height:18px;background:#a6bcd6"></div>
<div class="g gg gc a" style="left:438px;top:207px;width:49px;text-align:center;line-height:16px">Client</div>
<div class="a" style="left:535px;top:206px;width:1px;height:18px;background:#a6bcd6"></div>
<div class="g gg gc a" style="left:487px;top:207px;width:49px;text-align:center;line-height:16px">Réseau</div>
<div class="a" style="left:664px;top:206px;width:1px;height:18px;background:#a6bcd6"></div>
<div class="g gg gc a" style="left:536px;top:207px;width:129px;text-align:center;line-height:16px">Raison sociale</div>
<div class="a" style="left:705px;top:206px;width:1px;height:18px;background:#a6bcd6"></div>
<div class="g gg gc a" style="left:665px;top:207px;width:41px;text-align:center;line-height:16px">C.P.</div>
<div class="a" style="left:914px;top:206px;width:1px;height:18px;background:#a6bcd6"></div>
<div class="g gg gc a" style="left:706px;top:207px;width:209px;text-align:center;line-height:16px">Ville</div>
<div class="a" style="left:963px;top:206px;width:1px;height:18px;background:#a6bcd6"></div>
<div class="g gg gc a" style="left:915px;top:207px;width:49px;text-align:center;line-height:16px">Famille</div>
<div class="a" style="left:1028px;top:206px;width:1px;height:18px;background:#a6bcd6"></div>
<div class="g gg gc a" style="left:964px;top:207px;width:65px;text-align:center;line-height:16px">Commercial</div>
<div class="a" style="left:437px;top:206px;width:1px;height:18px;background:#f0a23a"></div>
<div class="a" style="left:406px;top:224px;width:33px;height:16px;background:#fdd58a;border-bottom:1px solid #a9bfd6;border-right:1px solid #a9bfd6"></div>
<div class="a" style="left:439px;top:224px;width:590px;height:15px;background:#ffffff"></div>
<div class="a" style="left:707px;top:224px;width:208px;height:15px;background:#c8fcfc"></div>
<div class="g gg a" style="left:442px;top:224px;width:52.0px;overflow:hidden;color:#000">000001</div>
<div class="g gg a" style="left:491px;top:224px;width:52.0px;overflow:hidden;color:#000">0</div>
<div class="g gg a" style="left:540px;top:224px;width:142.4px;overflow:hidden;color:#000">BIGMAT BLOIS</div>
<div class="g gg a" style="left:669px;top:224px;width:42.9px;overflow:hidden;color:#000">01120</div>
<div class="g gg a" style="left:710px;top:224px;width:232.8px;overflow:hidden;color:#000">MONTLUEL</div>
<div class="g gg a" style="left:919px;top:224px;width:52.0px;overflow:hidden;color:#000">Pro</div>
<div class="g gg a" style="left:968px;top:224px;width:70.1px;overflow:hidden;color:#000">NORD</div>
<div class="a" style="left:406px;top:240px;width:33px;height:16px;background:#e3eaf6;border-bottom:1px solid #a9bfd6;border-right:1px solid #a9bfd6"></div>
<div class="a" style="left:439px;top:240px;width:590px;height:15px;background:#efefef"></div>
<div class="a" style="left:707px;top:240px;width:208px;height:15px;background:#c8fcfc"></div>
<div class="g gg a" style="left:442px;top:240px;width:52.0px;overflow:hidden;color:#000">000042</div>
<div class="g gg a" style="left:491px;top:240px;width:52.0px;overflow:hidden;color:#000">0</div>
<div class="g gg a" style="left:540px;top:240px;width:142.4px;overflow:hidden;color:#000">BRICO MONT DE MARSAN</div>
<div class="g gg a" style="left:669px;top:240px;width:42.9px;overflow:hidden;color:#000">40000</div>
<div class="g gg a" style="left:710px;top:240px;width:232.8px;overflow:hidden;color:#000">MONT-DE-MARSAN</div>
<div class="g gg a" style="left:968px;top:240px;width:70.1px;overflow:hidden;color:#000">SUD</div>
<div class="a" style="left:406px;top:256px;width:33px;height:16px;background:#e3eaf6;border-bottom:1px solid #a9bfd6;border-right:1px solid #a9bfd6"></div>
<div class="a" style="left:439px;top:256px;width:590px;height:15px;background:#ffffff"></div>
<div class="a" style="left:707px;top:256px;width:208px;height:15px;background:#c8fcfc"></div>
<div class="g gg a" style="left:442px;top:256px;width:52.0px;overflow:hidden;color:#000">000049</div>
<div class="g gg a" style="left:491px;top:256px;width:52.0px;overflow:hidden;color:#000">0</div>
<div class="g gg a" style="left:540px;top:256px;width:142.4px;overflow:hidden;color:#000">BPA MENUISERIE</div>
<div class="g gg a" style="left:669px;top:256px;width:42.9px;overflow:hidden;color:#000">66330</div>
<div class="g gg a" style="left:710px;top:256px;width:232.8px;overflow:hidden;color:#000">CABESTANY</div>
<div class="g gg a" style="left:968px;top:256px;width:70.1px;overflow:hidden;color:#000">SUD</div>
<div class="a" style="left:406px;top:272px;width:33px;height:16px;background:#e3eaf6;border-bottom:1px solid #a9bfd6;border-right:1px solid #a9bfd6"></div>
<div class="a" style="left:439px;top:272px;width:590px;height:15px;background:#efefef"></div>
<div class="a" style="left:707px;top:272px;width:208px;height:15px;background:#c8fcfc"></div>
<div class="g gg a" style="left:442px;top:272px;width:52.0px;overflow:hidden;color:#000">000052</div>
<div class="g gg a" style="left:491px;top:272px;width:52.0px;overflow:hidden;color:#000">0</div>
<div class="g gg a" style="left:540px;top:272px;width:142.4px;overflow:hidden;color:#000">MENUISERIE JUILLAN</div>
<div class="g gg a" style="left:669px;top:272px;width:42.9px;overflow:hidden;color:#000">65290</div>
<div class="g gg a" style="left:710px;top:272px;width:232.8px;overflow:hidden;color:#000">juillan</div>
<div class="g gg a" style="left:968px;top:272px;width:70.1px;overflow:hidden;color:#000">SUD</div>
<div class="a" style="left:406px;top:288px;width:33px;height:16px;background:#e3eaf6;border-bottom:1px solid #a9bfd6;border-right:1px solid #a9bfd6"></div>
<div class="a" style="left:439px;top:288px;width:590px;height:15px;background:#cc3333"></div>
<div class="g gg a" style="left:442px;top:288px;width:52.0px;overflow:hidden;color:#fff">000053</div>
<div class="g gg a" style="left:491px;top:288px;width:52.0px;overflow:hidden;color:#fff">0</div>
<div class="g gg a" style="left:540px;top:288px;width:142.4px;overflow:hidden;color:#fff">TEST LMT</div>
<div class="g gg a" style="left:968px;top:288px;width:70.1px;overflow:hidden;color:#fff">COMTEST</div>
<div class="a" style="left:406px;top:304px;width:33px;height:16px;background:#e3eaf6;border-bottom:1px solid #a9bfd6;border-right:1px solid #a9bfd6"></div>
<div class="a" style="left:439px;top:304px;width:590px;height:15px;background:#efefef"></div>
<div class="a" style="left:707px;top:304px;width:208px;height:15px;background:#c8fcfc"></div>
<div class="g gg a" style="left:442px;top:304px;width:52.0px;overflow:hidden;color:#000">000054</div>
<div class="g gg a" style="left:491px;top:304px;width:52.0px;overflow:hidden;color:#000">0</div>
<div class="g gg a" style="left:540px;top:304px;width:142.4px;overflow:hidden;color:#000">CAN 22265 1</div>
<div class="g gg a" style="left:669px;top:304px;width:42.9px;overflow:hidden;color:#000">65000</div>
<div class="g gg a" style="left:710px;top:304px;width:232.8px;overflow:hidden;color:#000">TARBES</div>
<div class="g gg a" style="left:968px;top:304px;width:70.1px;overflow:hidden;color:#000">COMTEST</div>
<div class="a" style="left:406px;top:320px;width:33px;height:16px;background:#e3eaf6;border-bottom:1px solid #a9bfd6;border-right:1px solid #a9bfd6"></div>
<div class="a" style="left:439px;top:320px;width:590px;height:15px;background:#ffffff"></div>
<div class="a" style="left:707px;top:320px;width:208px;height:15px;background:#c8fcfc"></div>
<div class="g gg a" style="left:442px;top:320px;width:52.0px;overflow:hidden;color:#000">000074</div>
<div class="g gg a" style="left:491px;top:320px;width:52.0px;overflow:hidden;color:#000">0</div>
<div class="g gg a" style="left:540px;top:320px;width:142.4px;overflow:hidden;color:#000">TEST CBS</div>
<div class="g gg a" style="left:669px;top:320px;width:42.9px;overflow:hidden;color:#000">65000</div>
<div class="g gg a" style="left:710px;top:320px;width:232.8px;overflow:hidden;color:#000">Tarbes</div>
<div class="g gg a" style="left:968px;top:320px;width:70.1px;overflow:hidden;color:#000">COMTEST</div>
<div class="a" style="left:406px;top:336px;width:33px;height:16px;background:#e3eaf6;border-bottom:1px solid #a9bfd6;border-right:1px solid #a9bfd6"></div>
<div class="a" style="left:439px;top:336px;width:590px;height:15px;background:#efefef"></div>
<div class="a" style="left:707px;top:336px;width:208px;height:15px;background:#c8fcfc"></div>
<div class="g gg a" style="left:442px;top:336px;width:52.0px;overflow:hidden;color:#000">000076</div>
<div class="g gg a" style="left:491px;top:336px;width:52.0px;overflow:hidden;color:#000">0</div>
<div class="g gg a" style="left:540px;top:336px;width:142.4px;overflow:hidden;color:#000">TEST ADRESSE</div>
<div class="g gg a" style="left:669px;top:336px;width:42.9px;overflow:hidden;color:#000">87000</div>
<div class="g gg a" style="left:710px;top:336px;width:232.8px;overflow:hidden;color:#000">LIMOGES</div>
<div class="g gg a" style="left:968px;top:336px;width:70.1px;overflow:hidden;color:#000">CAN</div>
<div class="a" style="left:406px;top:352px;width:33px;height:16px;background:#e3eaf6;border-bottom:1px solid #a9bfd6;border-right:1px solid #a9bfd6"></div>
<div class="a" style="left:439px;top:352px;width:590px;height:15px;background:#cc3333"></div>
<div class="g gg a" style="left:442px;top:352px;width:52.0px;overflow:hidden;color:#fff">000085</div>
<div class="g gg a" style="left:491px;top:352px;width:52.0px;overflow:hidden;color:#fff">0</div>
<div class="g gg a" style="left:540px;top:352px;width:142.4px;overflow:hidden;color:#fff">TEST CP ADR</div>
<div class="g gg a" style="left:669px;top:352px;width:42.9px;overflow:hidden;color:#fff">65000</div>
<div class="g gg a" style="left:710px;top:352px;width:232.8px;overflow:hidden;color:#fff">TARBES</div>
<div class="g gg a" style="left:968px;top:352px;width:70.1px;overflow:hidden;color:#fff">CAN</div>
<div class="a" style="left:406px;top:368px;width:33px;height:16px;background:#e3eaf6;border-bottom:1px solid #a9bfd6;border-right:1px solid #a9bfd6"></div>
<div class="a" style="left:439px;top:368px;width:590px;height:15px;background:#efefef"></div>
<div class="a" style="left:707px;top:368px;width:208px;height:15px;background:#c8fcfc"></div>
<div class="g gg a" style="left:442px;top:368px;width:52.0px;overflow:hidden;color:#000">000090</div>
<div class="g gg a" style="left:491px;top:368px;width:52.0px;overflow:hidden;color:#000">0</div>
<div class="g gg a" style="left:540px;top:368px;width:142.4px;overflow:hidden;color:#000">TEST LBE</div>
<div class="g gg a" style="left:968px;top:368px;width:70.1px;overflow:hidden;color:#000">CAN</div>
<div class="a" style="left:406px;top:384px;width:33px;height:16px;background:#e3eaf6;border-bottom:1px solid #a9bfd6;border-right:1px solid #a9bfd6"></div>
<div class="a" style="left:439px;top:384px;width:590px;height:15px;background:#ffffff"></div>
<div class="a" style="left:707px;top:384px;width:208px;height:15px;background:#c8fcfc"></div>
<div class="g gg a" style="left:442px;top:384px;width:52.0px;overflow:hidden;color:#000">000093</div>
<div class="g gg a" style="left:491px;top:384px;width:52.0px;overflow:hidden;color:#000">0</div>
<div class="g gg a" style="left:540px;top:384px;width:142.4px;overflow:hidden;color:#000">TEST FTT</div>
<div class="g gg a" style="left:968px;top:384px;width:70.1px;overflow:hidden;color:#000">SUD</div>
<div class="a" style="left:406px;top:400px;width:33px;height:16px;background:#e3eaf6;border-bottom:1px solid #a9bfd6;border-right:1px solid #a9bfd6"></div>
<div class="a" style="left:439px;top:400px;width:590px;height:15px;background:#efefef"></div>
<div class="a" style="left:707px;top:400px;width:208px;height:15px;background:#c8fcfc"></div>
<div class="g gg a" style="left:442px;top:400px;width:52.0px;overflow:hidden;color:#000">000095</div>
<div class="g gg a" style="left:491px;top:400px;width:52.0px;overflow:hidden;color:#000">0</div>
<div class="g gg a" style="left:540px;top:400px;width:142.4px;overflow:hidden;color:#000">C</div>
<div class="g gg a" style="left:968px;top:400px;width:70.1px;overflow:hidden;color:#000">SUD</div>
<div class="a" style="left:406px;top:416px;width:33px;height:16px;background:#e3eaf6;border-bottom:1px solid #a9bfd6;border-right:1px solid #a9bfd6"></div>
<div class="a" style="left:439px;top:416px;width:590px;height:15px;background:#ffffff"></div>
<div class="a" style="left:707px;top:416px;width:208px;height:15px;background:#c8fcfc"></div>
<div class="g gg a" style="left:442px;top:416px;width:52.0px;overflow:hidden;color:#000">000096</div>
<div class="g gg a" style="left:491px;top:416px;width:52.0px;overflow:hidden;color:#000">0</div>
<div class="g gg a" style="left:540px;top:416px;width:142.4px;overflow:hidden;color:#000">TEST FTT</div>
<div class="g gg a" style="left:968px;top:416px;width:70.1px;overflow:hidden;color:#000">COMTEST</div>
<div class="a" style="left:406px;top:432px;width:33px;height:16px;background:#e3eaf6;border-bottom:1px solid #a9bfd6;border-right:1px solid #a9bfd6"></div>
<div class="a" style="left:439px;top:432px;width:590px;height:15px;background:#efefef"></div>
<div class="a" style="left:707px;top:432px;width:208px;height:15px;background:#c8fcfc"></div>
<div class="g gg a" style="left:442px;top:432px;width:52.0px;overflow:hidden;color:#000">000098</div>
<div class="g gg a" style="left:491px;top:432px;width:52.0px;overflow:hidden;color:#000">0</div>
<div class="g gg a" style="left:540px;top:432px;width:142.4px;overflow:hidden;color:#000">BENOIT MORANDET</div>
<div class="g gg a" style="left:968px;top:432px;width:70.1px;overflow:hidden;color:#000">NORD</div>
<div class="a" style="left:406px;top:448px;width:33px;height:16px;background:#e3eaf6;border-bottom:1px solid #a9bfd6;border-right:1px solid #a9bfd6"></div>
<div class="a" style="left:439px;top:448px;width:590px;height:15px;background:#ffffff"></div>
<div class="a" style="left:707px;top:448px;width:208px;height:15px;background:#c8fcfc"></div>
<div class="g gg a" style="left:442px;top:448px;width:52.0px;overflow:hidden;color:#000">000100</div>
<div class="g gg a" style="left:491px;top:448px;width:52.0px;overflow:hidden;color:#000">0</div>
<div class="g gg a" style="left:540px;top:448px;width:142.4px;overflow:hidden;color:#000">TEST FTT3</div>
<div class="g gg a" style="left:968px;top:448px;width:70.1px;overflow:hidden;color:#000">CAN</div>
<div class="a" style="left:406px;top:464px;width:33px;height:16px;background:#e3eaf6;border-bottom:1px solid #a9bfd6;border-right:1px solid #a9bfd6"></div>
<div class="a" style="left:439px;top:464px;width:590px;height:15px;background:#efefef"></div>
<div class="a" style="left:707px;top:464px;width:208px;height:15px;background:#c8fcfc"></div>
<div class="g gg a" style="left:442px;top:464px;width:52.0px;overflow:hidden;color:#000">000101</div>
<div class="g gg a" style="left:491px;top:464px;width:52.0px;overflow:hidden;color:#000">0</div>
<div class="g gg a" style="left:540px;top:464px;width:142.4px;overflow:hidden;color:#000">MENUISERIE DES LILAS</div>
<div class="g gg a" style="left:669px;top:464px;width:42.9px;overflow:hidden;color:#000">65000</div>
<div class="g gg a" style="left:710px;top:464px;width:232.8px;overflow:hidden;color:#000">TARBES</div>
<div class="g gg a" style="left:968px;top:464px;width:70.1px;overflow:hidden;color:#000">CAN</div>
<div class="a" style="left:406px;top:480px;width:33px;height:16px;background:#e3eaf6;border-bottom:1px solid #a9bfd6;border-right:1px solid #a9bfd6"></div>
<div class="a" style="left:439px;top:480px;width:590px;height:15px;background:#ffffff"></div>
<div class="a" style="left:707px;top:480px;width:208px;height:15px;background:#c8fcfc"></div>
<div class="g gg a" style="left:442px;top:480px;width:52.0px;overflow:hidden;color:#000">000102</div>
<div class="g gg a" style="left:491px;top:480px;width:52.0px;overflow:hidden;color:#000">0</div>
<div class="g gg a" style="left:540px;top:480px;width:142.4px;overflow:hidden;color:#000">MENUISERIES GAC</div>
<div class="g gg a" style="left:669px;top:480px;width:42.9px;overflow:hidden;color:#000">01120</div>
<div class="g gg a" style="left:710px;top:480px;width:232.8px;overflow:hidden;color:#000">MONTLUEL</div>
<div class="g gg a" style="left:919px;top:480px;width:52.0px;overflow:hidden;color:#000">Pro</div>
<div class="g gg a" style="left:968px;top:480px;width:70.1px;overflow:hidden;color:#000">NORD</div>
<div class="a" style="left:406px;top:496px;width:33px;height:16px;background:#e3eaf6;border-bottom:1px solid #a9bfd6;border-right:1px solid #a9bfd6"></div>
<div class="a" style="left:439px;top:496px;width:590px;height:15px;background:#efefef"></div>
<div class="a" style="left:707px;top:496px;width:208px;height:15px;background:#c8fcfc"></div>
<div class="g gg a" style="left:442px;top:496px;width:52.0px;overflow:hidden;color:#000">000103</div>
<div class="g gg a" style="left:491px;top:496px;width:52.0px;overflow:hidden;color:#000">0</div>
<div class="g gg a" style="left:540px;top:496px;width:142.4px;overflow:hidden;color:#000">MLE</div>
<div class="g gg a" style="left:669px;top:496px;width:42.9px;overflow:hidden;color:#000">65000</div>
<div class="g gg a" style="left:710px;top:496px;width:232.8px;overflow:hidden;color:#000">TARBES</div>
<div class="g gg a" style="left:968px;top:496px;width:70.1px;overflow:hidden;color:#000">COMTEST</div>
<div class="a" style="left:406px;top:512px;width:33px;height:16px;background:#e3eaf6;border-bottom:1px solid #a9bfd6;border-right:1px solid #a9bfd6"></div>
<div class="a" style="left:439px;top:512px;width:590px;height:15px;background:#ffffff"></div>
<div class="a" style="left:707px;top:512px;width:208px;height:15px;background:#c8fcfc"></div>
<div class="g gg a" style="left:442px;top:512px;width:52.0px;overflow:hidden;color:#000">000113</div>
<div class="g gg a" style="left:491px;top:512px;width:52.0px;overflow:hidden;color:#000">0</div>
<div class="g gg a" style="left:540px;top:512px;width:142.4px;overflow:hidden;color:#000">C</div>
<div class="g gg a" style="left:669px;top:512px;width:42.9px;overflow:hidden;color:#000">10200</div>
<div class="g gg a" style="left:710px;top:512px;width:232.8px;overflow:hidden;color:#000">BAR-SUR-AUBE</div>
<div class="g gg a" style="left:919px;top:512px;width:52.0px;overflow:hidden;color:#000">NEGO</div>
<div class="g gg a" style="left:968px;top:512px;width:70.1px;overflow:hidden;color:#000">NORD</div>
<div class="a" style="left:406px;top:528px;width:33px;height:16px;background:#e3eaf6;border-bottom:1px solid #a9bfd6;border-right:1px solid #a9bfd6"></div>
<div class="a" style="left:439px;top:528px;width:590px;height:15px;background:#efefef"></div>
<div class="a" style="left:707px;top:528px;width:208px;height:15px;background:#c8fcfc"></div>
<div class="g gg a" style="left:442px;top:528px;width:52.0px;overflow:hidden;color:#000">000119</div>
<div class="g gg a" style="left:491px;top:528px;width:52.0px;overflow:hidden;color:#000">0</div>
<div class="g gg a" style="left:540px;top:528px;width:142.4px;overflow:hidden;color:#000">ETS DUBOIS</div>
<div class="g gg a" style="left:968px;top:528px;width:70.1px;overflow:hidden;color:#000">ADUPONT</div>
<div class="a" style="left:406px;top:544px;width:33px;height:16px;background:#e3eaf6;border-bottom:1px solid #a9bfd6;border-right:1px solid #a9bfd6"></div>
<div class="a" style="left:439px;top:544px;width:590px;height:15px;background:#ffffff"></div>
<div class="a" style="left:707px;top:544px;width:208px;height:15px;background:#c8fcfc"></div>
<div class="g gg a" style="left:442px;top:544px;width:52.0px;overflow:hidden;color:#000">000123</div>
<div class="g gg a" style="left:491px;top:544px;width:52.0px;overflow:hidden;color:#000">0</div>
<div class="g gg a" style="left:540px;top:544px;width:142.4px;overflow:hidden;color:#000">TEST GAC</div>
<div class="g gg a" style="left:968px;top:544px;width:70.1px;overflow:hidden;color:#000">ADUPONT</div>
<div class="a" style="left:406px;top:560px;width:33px;height:16px;background:#e3eaf6;border-bottom:1px solid #a9bfd6;border-right:1px solid #a9bfd6"></div>
<div class="a" style="left:439px;top:560px;width:590px;height:15px;background:#cc3333"></div>
<div class="g gg a" style="left:442px;top:560px;width:52.0px;overflow:hidden;color:#fff">000124</div>
<div class="g gg a" style="left:491px;top:560px;width:52.0px;overflow:hidden;color:#fff">0</div>
<div class="g gg a" style="left:540px;top:560px;width:142.4px;overflow:hidden;color:#fff">TREST</div>
<div class="g gg a" style="left:669px;top:560px;width:42.9px;overflow:hidden;color:#fff">02100</div>
<div class="g gg a" style="left:710px;top:560px;width:232.8px;overflow:hidden;color:#fff">SAINT QUENTIN</div>
<div class="g gg a" style="left:968px;top:560px;width:70.1px;overflow:hidden;color:#fff">ADUPONT</div>
<div class="a" style="left:406px;top:576px;width:33px;height:16px;background:#e3eaf6;border-bottom:1px solid #a9bfd6;border-right:1px solid #a9bfd6"></div>
<div class="a" style="left:439px;top:576px;width:590px;height:15px;background:#ffffff"></div>
<div class="a" style="left:707px;top:576px;width:208px;height:15px;background:#c8fcfc"></div>
<div class="g gg a" style="left:442px;top:576px;width:52.0px;overflow:hidden;color:#000">000125</div>
<div class="g gg a" style="left:491px;top:576px;width:52.0px;overflow:hidden;color:#000">0</div>
<div class="g gg a" style="left:540px;top:576px;width:142.4px;overflow:hidden;color:#000">MENUISERIE JUILLANAIS</div>
<div class="g gg a" style="left:669px;top:576px;width:42.9px;overflow:hidden;color:#000">65290</div>
<div class="g gg a" style="left:710px;top:576px;width:232.8px;overflow:hidden;color:#000">JUILLAN</div>
<div class="g gg a" style="left:968px;top:576px;width:70.1px;overflow:hidden;color:#000">CAN</div>
<div class="a" style="left:406px;top:592px;width:33px;height:16px;background:#e3eaf6;border-bottom:1px solid #a9bfd6;border-right:1px solid #a9bfd6"></div>
<div class="a" style="left:439px;top:592px;width:590px;height:15px;background:#efefef"></div>
<div class="a" style="left:707px;top:592px;width:208px;height:15px;background:#c8fcfc"></div>
<div class="g gg a" style="left:442px;top:592px;width:52.0px;overflow:hidden;color:#000">000126</div>
<div class="g gg a" style="left:491px;top:592px;width:52.0px;overflow:hidden;color:#000">0</div>
<div class="g gg a" style="left:540px;top:592px;width:142.4px;overflow:hidden;color:#000">FANNY</div>
<div class="g gg a" style="left:669px;top:592px;width:42.9px;overflow:hidden;color:#000">65290</div>
<div class="g gg a" style="left:710px;top:592px;width:232.8px;overflow:hidden;color:#000">JUILLAN</div>
<div class="g gg a" style="left:968px;top:592px;width:70.1px;overflow:hidden;color:#000">EST</div>
<div class="a" style="left:406px;top:608px;width:33px;height:16px;background:#e3eaf6;border-bottom:1px solid #a9bfd6;border-right:1px solid #a9bfd6"></div>
<div class="a" style="left:439px;top:608px;width:590px;height:15px;background:#ffffff"></div>
<div class="a" style="left:707px;top:608px;width:208px;height:15px;background:#c8fcfc"></div>
<div class="g gg a" style="left:442px;top:608px;width:52.0px;overflow:hidden;color:#000">000127</div>
<div class="g gg a" style="left:491px;top:608px;width:52.0px;overflow:hidden;color:#000">0</div>
<div class="g gg a" style="left:540px;top:608px;width:142.4px;overflow:hidden;color:#000">MENUISERIE DE JUILLAN</div>
<div class="g gg a" style="left:669px;top:608px;width:42.9px;overflow:hidden;color:#000">65290</div>
<div class="g gg a" style="left:710px;top:608px;width:232.8px;overflow:hidden;color:#000">Juillan</div>
<div class="g gg a" style="left:968px;top:608px;width:70.1px;overflow:hidden;color:#000">OUEST</div>
<div class="a" style="left:406px;top:624px;width:33px;height:16px;background:#e3eaf6;border-bottom:1px solid #a9bfd6;border-right:1px solid #a9bfd6"></div>
<div class="a" style="left:439px;top:624px;width:590px;height:15px;background:#efefef"></div>
<div class="a" style="left:707px;top:624px;width:208px;height:15px;background:#c8fcfc"></div>
<div class="g gg a" style="left:442px;top:624px;width:52.0px;overflow:hidden;color:#000">000128</div>
<div class="g gg a" style="left:491px;top:624px;width:52.0px;overflow:hidden;color:#000">0</div>
<div class="g gg a" style="left:540px;top:624px;width:142.4px;overflow:hidden;color:#000">BIGMAT BLOIS</div>
<div class="g gg a" style="left:669px;top:624px;width:42.9px;overflow:hidden;color:#000">01120</div>
<div class="g gg a" style="left:710px;top:624px;width:232.8px;overflow:hidden;color:#000">MONTLUEL</div>
<div class="g gg a" style="left:968px;top:624px;width:70.1px;overflow:hidden;color:#000">OUEST</div>
<div class="a" style="left:406px;top:640px;width:33px;height:16px;background:#e3eaf6;border-bottom:1px solid #a9bfd6;border-right:1px solid #a9bfd6"></div>
<div class="a" style="left:439px;top:640px;width:590px;height:15px;background:#ffffff"></div>
<div class="a" style="left:707px;top:640px;width:208px;height:15px;background:#c8fcfc"></div>
<div class="g gg a" style="left:442px;top:640px;width:52.0px;overflow:hidden;color:#000">000129</div>
<div class="g gg a" style="left:491px;top:640px;width:52.0px;overflow:hidden;color:#000">0</div>
<div class="g gg a" style="left:540px;top:640px;width:142.4px;overflow:hidden;color:#000">MENUISERIE JUILLANAIS</div>
<div class="g gg a" style="left:669px;top:640px;width:42.9px;overflow:hidden;color:#000">65290</div>
<div class="g gg a" style="left:710px;top:640px;width:232.8px;overflow:hidden;color:#000">Juillan</div>
<div class="g gg a" style="left:968px;top:640px;width:70.1px;overflow:hidden;color:#000">OUEST</div>
<div class="a" style="left:406px;top:656px;width:33px;height:16px;background:#e3eaf6;border-bottom:1px solid #a9bfd6;border-right:1px solid #a9bfd6"></div>
<div class="a" style="left:439px;top:656px;width:590px;height:15px;background:#efefef"></div>
<div class="a" style="left:707px;top:656px;width:208px;height:15px;background:#c8fcfc"></div>
<div class="g gg a" style="left:442px;top:656px;width:52.0px;overflow:hidden;color:#000">000130</div>
<div class="g gg a" style="left:491px;top:656px;width:52.0px;overflow:hidden;color:#000">0</div>
<div class="g gg a" style="left:540px;top:656px;width:142.4px;overflow:hidden;color:#000">ROBERT ALEXANDRE EN</div>
<div class="g gg a" style="left:669px;top:656px;width:42.9px;overflow:hidden;color:#000">44420</div>
<div class="g gg a" style="left:710px;top:656px;width:232.8px;overflow:hidden;color:#000">PIRIAC SUR MER</div>
<div class="g gg a" style="left:968px;top:656px;width:70.1px;overflow:hidden;color:#000">EST</div>
<div class="a" style="left:406px;top:672px;width:33px;height:16px;background:#e3eaf6;border-bottom:1px solid #a9bfd6;border-right:1px solid #a9bfd6"></div>
<div class="a" style="left:439px;top:672px;width:590px;height:15px;background:#ffffff"></div>
<div class="a" style="left:707px;top:672px;width:208px;height:15px;background:#c8fcfc"></div>
<div class="g gg a" style="left:442px;top:672px;width:52.0px;overflow:hidden;color:#000">000131</div>
<div class="g gg a" style="left:491px;top:672px;width:52.0px;overflow:hidden;color:#000">0</div>
<div class="g gg a" style="left:540px;top:672px;width:142.4px;overflow:hidden;color:#000">TEST GAC 5</div>
<div class="g gg a" style="left:968px;top:672px;width:70.1px;overflow:hidden;color:#000">ADUPONT</div>
<div class="a" style="left:406px;top:688px;width:33px;height:16px;background:#e3eaf6;border-bottom:1px solid #a9bfd6;border-right:1px solid #a9bfd6"></div>
<div class="a" style="left:439px;top:688px;width:590px;height:15px;background:#efefef"></div>
<div class="a" style="left:707px;top:688px;width:208px;height:15px;background:#c8fcfc"></div>
<div class="g gg a" style="left:442px;top:688px;width:52.0px;overflow:hidden;color:#000">GAC1</div>
<div class="g gg a" style="left:491px;top:688px;width:52.0px;overflow:hidden;color:#000">0</div>
<div class="g gg a" style="left:540px;top:688px;width:142.4px;overflow:hidden;color:#000">BIGMAT BLOIS</div>
<div class="g gg a" style="left:669px;top:688px;width:42.9px;overflow:hidden;color:#000">01120</div>
<div class="g gg a" style="left:710px;top:688px;width:232.8px;overflow:hidden;color:#000">MONTLUEL</div>
<div class="g gg a" style="left:919px;top:688px;width:52.0px;overflow:hidden;color:#000">AMOB</div>
<div class="g gg a" style="left:968px;top:688px;width:70.1px;overflow:hidden;color:#000">NORD</div>
<div class="a" style="left:406px;top:704px;width:33px;height:16px;background:#e3eaf6;border-bottom:1px solid #a9bfd6;border-right:1px solid #a9bfd6"></div>
<div class="a" style="left:439px;top:704px;width:590px;height:15px;background:#ffffff"></div>
<div class="a" style="left:707px;top:704px;width:208px;height:15px;background:#c8fcfc"></div>
<div class="g gg a" style="left:442px;top:704px;width:52.0px;overflow:hidden;color:#000">GAC2</div>
<div class="g gg a" style="left:491px;top:704px;width:52.0px;overflow:hidden;color:#000">0</div>
<div class="g gg a" style="left:540px;top:704px;width:142.4px;overflow:hidden;color:#000">BIGMAT BLOIS</div>
<div class="g gg a" style="left:669px;top:704px;width:42.9px;overflow:hidden;color:#000">01120</div>
<div class="g gg a" style="left:710px;top:704px;width:232.8px;overflow:hidden;color:#000">MONTLUEL</div>
<div class="g gg a" style="left:919px;top:704px;width:52.0px;overflow:hidden;color:#000">AMOB</div>
<div class="g gg a" style="left:968px;top:704px;width:70.1px;overflow:hidden;color:#000">TEST</div>
<div class="a" style="left:406px;top:720px;width:33px;height:16px;background:#e3eaf6;border-bottom:1px solid #a9bfd6;border-right:1px solid #a9bfd6"></div>
<div class="a" style="left:439px;top:720px;width:590px;height:15px;background:#efefef"></div>
<div class="a" style="left:707px;top:720px;width:208px;height:15px;background:#c8fcfc"></div>
<div class="g gg a" style="left:442px;top:720px;width:52.0px;overflow:hidden;color:#000">000001</div>
<div class="g gg a" style="left:491px;top:720px;width:52.0px;overflow:hidden;color:#000">01</div>
<div class="g gg a" style="left:540px;top:720px;width:142.4px;overflow:hidden;color:#000">MAISONS D'EN FRANCE</div>
<div class="g gg a" style="left:669px;top:720px;width:42.9px;overflow:hidden;color:#000">65000</div>
<div class="g gg a" style="left:710px;top:720px;width:232.8px;overflow:hidden;color:#000">TARBES</div>
<div class="g gg a" style="left:968px;top:720px;width:70.1px;overflow:hidden;color:#000">COMTEST</div>
<div class="a" style="left:406px;top:736px;width:33px;height:16px;background:#e3eaf6;border-bottom:1px solid #a9bfd6;border-right:1px solid #a9bfd6"></div>
<div class="a" style="left:439px;top:736px;width:590px;height:15px;background:#ffffff"></div>
<div class="a" style="left:707px;top:736px;width:208px;height:15px;background:#c8fcfc"></div>
<div class="g gg a" style="left:442px;top:736px;width:52.0px;overflow:hidden;color:#000">000002</div>
<div class="g gg a" style="left:491px;top:736px;width:52.0px;overflow:hidden;color:#000">01</div>
<div class="g gg a" style="left:540px;top:736px;width:142.4px;overflow:hidden;color:#000">MAISONS D'EN FRANCE</div>
<div class="g gg a" style="left:669px;top:736px;width:42.9px;overflow:hidden;color:#000">13090</div>
<div class="g gg a" style="left:710px;top:736px;width:232.8px;overflow:hidden;color:#000">Aix-en-provence</div>
<div class="g gg a" style="left:968px;top:736px;width:70.1px;overflow:hidden;color:#000">SUD</div>
<div class="a" style="left:406px;top:752px;width:33px;height:16px;background:#e3eaf6;border-bottom:1px solid #a9bfd6;border-right:1px solid #a9bfd6"></div>
<div class="a" style="left:439px;top:752px;width:590px;height:15px;background:#cc3333"></div>
<div class="g gg a" style="left:442px;top:752px;width:52.0px;overflow:hidden;color:#fff">000003</div>
<div class="g gg a" style="left:491px;top:752px;width:52.0px;overflow:hidden;color:#fff">01</div>
<div class="g gg a" style="left:540px;top:752px;width:142.4px;overflow:hidden;color:#fff">BIGMAT CAEN</div>
<div class="g gg a" style="left:669px;top:752px;width:42.9px;overflow:hidden;color:#fff">47550</div>
<div class="g gg a" style="left:710px;top:752px;width:232.8px;overflow:hidden;color:#fff">BOE</div>
<div class="g gg a" style="left:919px;top:752px;width:52.0px;overflow:hidden;color:#fff">Pro</div>
<div class="g gg a" style="left:968px;top:752px;width:70.1px;overflow:hidden;color:#fff">OUEST</div>
<div class="a" style="left:406px;top:768px;width:33px;height:16px;background:#e3eaf6;border-bottom:1px solid #a9bfd6;border-right:1px solid #a9bfd6"></div>
<div class="a" style="left:439px;top:768px;width:590px;height:15px;background:#ffffff"></div>
<div class="a" style="left:707px;top:768px;width:208px;height:15px;background:#c8fcfc"></div>
<div class="g gg a" style="left:442px;top:768px;width:52.0px;overflow:hidden;color:#000">000004</div>
<div class="g gg a" style="left:491px;top:768px;width:52.0px;overflow:hidden;color:#000">01</div>
<div class="g gg a" style="left:540px;top:768px;width:142.4px;overflow:hidden;color:#000">BIGMAT SIEGE</div>
<div class="g gg a" style="left:669px;top:768px;width:42.9px;overflow:hidden;color:#000">65000</div>
<div class="g gg a" style="left:710px;top:768px;width:232.8px;overflow:hidden;color:#000">Tarbes</div>
<div class="g gg a" style="left:919px;top:768px;width:52.0px;overflow:hidden;color:#000">Pro</div>
<div class="a" style="left:406px;top:784px;width:33px;height:16px;background:#e3eaf6;border-bottom:1px solid #a9bfd6;border-right:1px solid #a9bfd6"></div>
<div class="a" style="left:439px;top:784px;width:590px;height:15px;background:#efefef"></div>
<div class="a" style="left:707px;top:784px;width:208px;height:15px;background:#c8fcfc"></div>
<div class="g gg a" style="left:442px;top:784px;width:52.0px;overflow:hidden;color:#000">000005</div>
<div class="g gg a" style="left:491px;top:784px;width:52.0px;overflow:hidden;color:#000">01</div>
<div class="g gg a" style="left:540px;top:784px;width:142.4px;overflow:hidden;color:#000">BIGMAT BROU</div>
<div class="g gg a" style="left:669px;top:784px;width:42.9px;overflow:hidden;color:#000">28160</div>
<div class="g gg a" style="left:710px;top:784px;width:232.8px;overflow:hidden;color:#000">BROU</div>
<div class="g gg a" style="left:919px;top:784px;width:52.0px;overflow:hidden;color:#000">Pro</div>
<div class="g gg a" style="left:968px;top:784px;width:70.1px;overflow:hidden;color:#000">NORD</div>
<div class="a" style="left:406px;top:800px;width:33px;height:16px;background:#e3eaf6;border-bottom:1px solid #a9bfd6;border-right:1px solid #a9bfd6"></div>
<div class="a" style="left:439px;top:800px;width:590px;height:15px;background:#ffffff"></div>
<div class="a" style="left:707px;top:800px;width:208px;height:15px;background:#c8fcfc"></div>
<div class="g gg a" style="left:442px;top:800px;width:52.0px;overflow:hidden;color:#000">000006</div>
<div class="g gg a" style="left:491px;top:800px;width:52.0px;overflow:hidden;color:#000">01</div>
<div class="g gg a" style="left:540px;top:800px;width:142.4px;overflow:hidden;color:#000">BIGMAT CANY</div>
<div class="g gg a" style="left:669px;top:800px;width:42.9px;overflow:hidden;color:#000">64000</div>
<div class="g gg a" style="left:710px;top:800px;width:232.8px;overflow:hidden;color:#000">PAU</div>
<div class="g gg a" style="left:919px;top:800px;width:52.0px;overflow:hidden;color:#000">Pro</div>
<div class="g gg a" style="left:968px;top:800px;width:70.1px;overflow:hidden;color:#000">NORD</div>
<div class="a" style="left:406px;top:816px;width:33px;height:16px;background:#e3eaf6;border-bottom:1px solid #a9bfd6;border-right:1px solid #a9bfd6"></div>
<div class="a" style="left:439px;top:816px;width:590px;height:15px;background:#cc3333"></div>
<div class="g gg a" style="left:442px;top:816px;width:52.0px;overflow:hidden;color:#fff">000007</div>
<div class="g gg a" style="left:491px;top:816px;width:52.0px;overflow:hidden;color:#fff">01</div>
<div class="g gg a" style="left:540px;top:816px;width:142.4px;overflow:hidden;color:#fff">BIGMAT AUCH</div>
<div class="g gg a" style="left:669px;top:816px;width:42.9px;overflow:hidden;color:#fff">32000</div>
<div class="g gg a" style="left:710px;top:816px;width:232.8px;overflow:hidden;color:#fff">AUCH</div>
<div class="g gg a" style="left:919px;top:816px;width:52.0px;overflow:hidden;color:#fff">Pro</div>
<div class="g gg a" style="left:968px;top:816px;width:70.1px;overflow:hidden;color:#fff">SUD</div>
<div class="a" style="left:406px;top:832px;width:33px;height:16px;background:#e3eaf6;border-bottom:1px solid #a9bfd6;border-right:1px solid #a9bfd6"></div>
<div class="a" style="left:439px;top:832px;width:590px;height:15px;background:#ffffff"></div>
<div class="a" style="left:707px;top:832px;width:208px;height:15px;background:#c8fcfc"></div>
<div class="g gg a" style="left:442px;top:832px;width:52.0px;overflow:hidden;color:#000">000008</div>
<div class="g gg a" style="left:491px;top:832px;width:52.0px;overflow:hidden;color:#000">01</div>
<div class="g gg a" style="left:540px;top:832px;width:142.4px;overflow:hidden;color:#000">BIGMAT CAUDEBEC</div>
<div class="g gg a" style="left:669px;top:832px;width:42.9px;overflow:hidden;color:#000">76320</div>
<div class="g gg a" style="left:710px;top:832px;width:232.8px;overflow:hidden;color:#000">Caudebec-lès-Elbeuf</div>
<div class="g gg a" style="left:919px;top:832px;width:52.0px;overflow:hidden;color:#000">Pro</div>
<div class="g gg a" style="left:968px;top:832px;width:70.1px;overflow:hidden;color:#000">NORD</div>
<div class="a" style="left:406px;top:848px;width:33px;height:16px;background:#e3eaf6;border-bottom:1px solid #a9bfd6;border-right:1px solid #a9bfd6"></div>
<div class="a" style="left:439px;top:848px;width:590px;height:15px;background:#cc3333"></div>
<div class="g gg a" style="left:442px;top:848px;width:52.0px;overflow:hidden;color:#fff">000009</div>
<div class="g gg a" style="left:491px;top:848px;width:52.0px;overflow:hidden;color:#fff">01</div>
<div class="g gg a" style="left:540px;top:848px;width:142.4px;overflow:hidden;color:#fff">BIGMAT AYTRE</div>
<div class="g gg a" style="left:669px;top:848px;width:42.9px;overflow:hidden;color:#fff">17440</div>
<div class="g gg a" style="left:710px;top:848px;width:232.8px;overflow:hidden;color:#fff">Aytre</div>
<div class="g gg a" style="left:919px;top:848px;width:52.0px;overflow:hidden;color:#fff">Pro</div>
<div class="g gg a" style="left:968px;top:848px;width:70.1px;overflow:hidden;color:#fff">OUEST</div>
<div class="a" style="left:406px;top:864px;width:33px;height:16px;background:#e3eaf6;border-bottom:1px solid #a9bfd6;border-right:1px solid #a9bfd6"></div>
<div class="a" style="left:439px;top:864px;width:590px;height:15px;background:#cc3333"></div>
<div class="g gg a" style="left:442px;top:864px;width:52.0px;overflow:hidden;color:#fff">000010</div>
<div class="g gg a" style="left:491px;top:864px;width:52.0px;overflow:hidden;color:#fff">01</div>
<div class="g gg a" style="left:540px;top:864px;width:142.4px;overflow:hidden;color:#fff">BIGMAT CHAMBLY BROC</div>
<div class="g gg a" style="left:669px;top:864px;width:42.9px;overflow:hidden;color:#fff">65000</div>
<div class="g gg a" style="left:710px;top:864px;width:232.8px;overflow:hidden;color:#fff">TARBES</div>
<div class="g gg a" style="left:919px;top:864px;width:52.0px;overflow:hidden;color:#fff">Pro</div>
<div class="g gg a" style="left:968px;top:864px;width:70.1px;overflow:hidden;color:#fff">NORD</div>
<div class="a" style="left:406px;top:880px;width:33px;height:16px;background:#e3eaf6;border-bottom:1px solid #a9bfd6;border-right:1px solid #a9bfd6"></div>
<div class="a" style="left:439px;top:880px;width:590px;height:15px;background:#cc3333"></div>
<div class="g gg a" style="left:442px;top:880px;width:52.0px;overflow:hidden;color:#fff">000011</div>
<div class="g gg a" style="left:491px;top:880px;width:52.0px;overflow:hidden;color:#fff">01</div>
<div class="g gg a" style="left:540px;top:880px;width:142.4px;overflow:hidden;color:#fff">BIGMAT BATAILLE BRETEUIL</div>
<div class="g gg a" style="left:669px;top:880px;width:42.9px;overflow:hidden;color:#fff">27160</div>
<div class="g gg a" style="left:710px;top:880px;width:232.8px;overflow:hidden;color:#fff">BRETEUIL</div>
<div class="g gg a" style="left:919px;top:880px;width:52.0px;overflow:hidden;color:#fff">Pro</div>
<div class="g gg a" style="left:968px;top:880px;width:70.1px;overflow:hidden;color:#fff">NORD</div>
<div class="a" style="left:406px;top:896px;width:33px;height:16px;background:#e3eaf6;border-bottom:1px solid #a9bfd6;border-right:1px solid #a9bfd6"></div>
<div class="a" style="left:439px;top:896px;width:590px;height:15px;background:#ffffff"></div>
<div class="a" style="left:707px;top:896px;width:208px;height:15px;background:#c8fcfc"></div>
<div class="g gg a" style="left:442px;top:896px;width:52.0px;overflow:hidden;color:#000">000012</div>
<div class="g gg a" style="left:491px;top:896px;width:52.0px;overflow:hidden;color:#000">01</div>
<div class="g gg a" style="left:540px;top:896px;width:142.4px;overflow:hidden;color:#000">BIGMAT BATAILLE LISIEUX</div>
<div class="g gg a" style="left:669px;top:896px;width:42.9px;overflow:hidden;color:#000">14100</div>
<div class="g gg a" style="left:710px;top:896px;width:232.8px;overflow:hidden;color:#000">Lisieux</div>
<div class="g gg a" style="left:919px;top:896px;width:52.0px;overflow:hidden;color:#000">Pro</div>
<div class="g gg a" style="left:968px;top:896px;width:70.1px;overflow:hidden;color:#000">NORD</div>
<div class="a" style="left:406px;top:912px;width:33px;height:16px;background:#e3eaf6;border-bottom:1px solid #a9bfd6;border-right:1px solid #a9bfd6"></div>
<div class="a" style="left:439px;top:912px;width:590px;height:15px;background:#cc3333"></div>
<div class="g gg a" style="left:442px;top:912px;width:52.0px;overflow:hidden;color:#fff">000013</div>
<div class="g gg a" style="left:491px;top:912px;width:52.0px;overflow:hidden;color:#fff">01</div>
<div class="g gg a" style="left:540px;top:912px;width:142.4px;overflow:hidden;color:#fff">BIGMAT CHAMPAGNE-LES</div>
<div class="g gg a" style="left:669px;top:912px;width:42.9px;overflow:hidden;color:#fff">85450</div>
<div class="g gg a" style="left:710px;top:912px;width:232.8px;overflow:hidden;color:#fff">CHAMPAGNE-LES-MARAIS</div>
<div class="g gg a" style="left:919px;top:912px;width:52.0px;overflow:hidden;color:#fff">Pro</div>
<div class="g gg a" style="left:968px;top:912px;width:70.1px;overflow:hidden;color:#fff">OUEST</div>
<div class="a" style="left:406px;top:928px;width:33px;height:16px;background:#e3eaf6;border-bottom:1px solid #a9bfd6;border-right:1px solid #a9bfd6"></div>
<div class="a" style="left:439px;top:928px;width:590px;height:15px;background:#cc3333"></div>
<div class="g gg a" style="left:442px;top:928px;width:52.0px;overflow:hidden;color:#fff">000014</div>
<div class="g gg a" style="left:491px;top:928px;width:52.0px;overflow:hidden;color:#fff">01</div>
<div class="g gg a" style="left:540px;top:928px;width:142.4px;overflow:hidden;color:#fff">BIGMAT CHATEAUNEUF</div>
<div class="g gg a" style="left:669px;top:928px;width:42.9px;overflow:hidden;color:#fff">45110</div>
<div class="g gg a" style="left:710px;top:928px;width:232.8px;overflow:hidden;color:#fff">CHATEAUNEUF-SUR-LOIRE</div>
<div class="g gg a" style="left:919px;top:928px;width:52.0px;overflow:hidden;color:#fff">Pro</div>
<div class="g gg a" style="left:968px;top:928px;width:70.1px;overflow:hidden;color:#fff">NORD</div>
<div class="a" style="left:406px;top:944px;width:33px;height:16px;background:#e3eaf6;border-bottom:1px solid #a9bfd6;border-right:1px solid #a9bfd6"></div>
<div class="a" style="left:439px;top:944px;width:590px;height:15px;background:#efefef"></div>
<div class="a" style="left:707px;top:944px;width:208px;height:15px;background:#c8fcfc"></div>
<div class="g gg a" style="left:442px;top:944px;width:52.0px;overflow:hidden;color:#000">000015</div>
<div class="g gg a" style="left:491px;top:944px;width:52.0px;overflow:hidden;color:#000">01</div>
<div class="g gg a" style="left:540px;top:944px;width:142.4px;overflow:hidden;color:#000">BIGMAT CONDOM</div>
<div class="g gg a" style="left:669px;top:944px;width:42.9px;overflow:hidden;color:#000">32100</div>
<div class="g gg a" style="left:710px;top:944px;width:232.8px;overflow:hidden;color:#000">CONDOM</div>
<div class="g gg a" style="left:919px;top:944px;width:52.0px;overflow:hidden;color:#000">Pro</div>
<div class="g gg a" style="left:968px;top:944px;width:70.1px;overflow:hidden;color:#000">SUD</div>
<div class="a" style="left:406px;top:960px;width:33px;height:16px;background:#e3eaf6;border-bottom:1px solid #a9bfd6;border-right:1px solid #a9bfd6"></div>
<div class="a" style="left:439px;top:960px;width:590px;height:15px;background:#ffffff"></div>
<div class="a" style="left:707px;top:960px;width:208px;height:15px;background:#c8fcfc"></div>
<div class="g gg a" style="left:442px;top:960px;width:52.0px;overflow:hidden;color:#000">000016</div>
<div class="g gg a" style="left:491px;top:960px;width:52.0px;overflow:hidden;color:#000">01</div>
<div class="g gg a" style="left:540px;top:960px;width:142.4px;overflow:hidden;color:#000">BIGMAT BAULE</div>
<div class="g gg a" style="left:669px;top:960px;width:42.9px;overflow:hidden;color:#000">45130</div>
<div class="g gg a" style="left:710px;top:960px;width:232.8px;overflow:hidden;color:#000">BAULE</div>
<div class="g gg a" style="left:968px;top:960px;width:70.1px;overflow:hidden;color:#000">NORD</div>
<div class="a" style="left:406px;top:976px;width:33px;height:16px;background:#e3eaf6;border-bottom:1px solid #a9bfd6;border-right:1px solid #a9bfd6"></div>
<div class="a" style="left:439px;top:976px;width:590px;height:15px;background:#cc3333"></div>
<div class="g gg a" style="left:442px;top:976px;width:52.0px;overflow:hidden;color:#fff">000017</div>
<div class="g gg a" style="left:491px;top:976px;width:52.0px;overflow:hidden;color:#fff">01</div>
<div class="g gg a" style="left:540px;top:976px;width:142.4px;overflow:hidden;color:#fff">BIGMAT COUSANCE</div>
<div class="g gg a" style="left:669px;top:976px;width:42.9px;overflow:hidden;color:#fff">39190</div>
<div class="g gg a" style="left:710px;top:976px;width:232.8px;overflow:hidden;color:#fff">COUSANCE</div>
<div class="g gg a" style="left:919px;top:976px;width:52.0px;overflow:hidden;color:#fff">PART</div>
<div class="g gg a" style="left:968px;top:976px;width:70.1px;overflow:hidden;color:#fff">OUEST</div>
<div class="a" style="left:487px;top:224px;width:1px;height:768px;background:repeating-linear-gradient(#b8b8b8 0 1px,transparent 1px 2px);opacity:.9"></div>
<div class="a" style="left:536px;top:224px;width:1px;height:768px;background:repeating-linear-gradient(#b8b8b8 0 1px,transparent 1px 2px);opacity:.9"></div>
<div class="a" style="left:665px;top:224px;width:1px;height:768px;background:repeating-linear-gradient(#b8b8b8 0 1px,transparent 1px 2px);opacity:.9"></div>
<div class="a" style="left:706px;top:224px;width:1px;height:768px;background:repeating-linear-gradient(#b8b8b8 0 1px,transparent 1px 2px);opacity:.9"></div>
<div class="a" style="left:915px;top:224px;width:1px;height:768px;background:repeating-linear-gradient(#b8b8b8 0 1px,transparent 1px 2px);opacity:.9"></div>
<div class="a" style="left:964px;top:224px;width:1px;height:768px;background:repeating-linear-gradient(#b8b8b8 0 1px,transparent 1px 2px);opacity:.9"></div>
<div class="a" style="left:1029px;top:224px;width:1px;height:768px;background:#a0a0a0"></div>
<div class="a" style="left:438px;top:223px;width:50px;height:18px;border:1px solid #000;border-bottom-width:2px;border-right-width:2px"></div>
<div class="a" style="left:1148px;top:206px;width:16px;height:786px;background:#7295c0"></div>
<div class="a" style="left:1148px;top:206px;width:16px;height:16px;background:linear-gradient(90deg,#dce8f8 50%,#c5d8f0 50%);border:1px solid #5a6e96"></div>
<svg style="left:1151px;top:210px" width="10" height="6" viewBox="0 0 10 6"><path d="M0.5 5.5 L5 0.5 L9.5 5.5Z" fill="#3c4660"/></svg>
<div class="a" style="left:1148px;top:221px;width:16px;height:280px;background:linear-gradient(90deg,#d6e4f6 50%,#c0d5f0 50%);border:1px solid #5a6e96"></div>
<div class="a" style="left:1148px;top:975px;width:16px;height:17px;background:linear-gradient(90deg,#dce8f8 50%,#c5d8f0 50%);border:1px solid #5a6e96"></div>
<svg style="left:1151px;top:981px" width="10" height="6" viewBox="0 0 10 6"><path d="M0.5 0.5 L5 5.5 L9.5 0.5Z" fill="#3c4660"/></svg>
<div class="a" style="left:1165px;top:204px;width:6px;height:820px;background:#9a9a9a;border-left:1px solid #ececec;border-right:1px solid #f0f0f0"></div>
<svg style="left:398px;top:581px" width="5" height="21"><g fill="#1f5fd0"><rect x="1" y="2" width="1.6" height="1.6"/><rect x="2.4" y="0.8" width="1.6" height="1.6"/><rect x="1" y="6" width="1.6" height="1.6"/><rect x="2.4" y="4.8" width="1.6" height="1.6"/><rect x="1" y="10" width="1.6" height="1.6"/><rect x="2.4" y="8.8" width="1.6" height="1.6"/><rect x="1" y="14" width="1.6" height="1.6"/><rect x="2.4" y="12.8" width="1.6" height="1.6"/><rect x="1" y="18" width="1.6" height="1.6"/><rect x="2.4" y="16.8" width="1.6" height="1.6"/></g></svg>
<div class="a" style="left:411px;top:999px;width:77px;height:20px;background:#e1e1e1;border:1px solid #adadad"></div>
<svg style="left:420px;top:1004px" width="12" height="12" viewBox="0 0 12 12"><path d="M1.5 1.5L10.5 10.5M10.5 1.5L1.5 10.5" stroke="#e8541e" stroke-width="2.6"/></svg>
<div class="g a" style="left:437px;top:1001px;color:#000">Abandon</div>
<svg style="left:488px;top:997px" width="14" height="22" viewBox="0 0 14 22"><path d="M1 1 V16.5 L4.6 13 L7.4 19.4 L9.8 18.4 L7.2 12.2 H12.2Z" fill="#fff" stroke="#000" stroke-width="1.1"/></svg>
<div class="a" style="left:1170px;top:204px;width:750px;height:820px;background:#f0f0f0"></div>
<div class="a" style="left:1170px;top:204px;width:750px;height:24px;background:linear-gradient(#eeeeee,#fafafa)"></div>
<div class="a" style="left:1171px;top:227px;width:749px;height:766px;background:#f0f0f0;border-left:1px solid #a0a0a0;border-top:1px solid #a0a0a0;border-bottom:1px solid #a0a0a0"></div>
<div class="a" style="left:1176px;top:230px;width:744px;height:741px;background:#fff"></div>
<svg style="left:1704.0px;top:208px" width="105.0" height="19" viewBox="0 0 105.0 19"><path d="M0.5 19.2 L12.4 2.2 Q13.6 0.5 15.8 0.5 H89.2 Q91.4 0.5 92.6 2.2 L104.5 19.2" fill="url(#tg)" stroke="#9c9c9c" stroke-width="1"/></svg>
<svg style="left:1616.0px;top:208px" width="105.0" height="19" viewBox="0 0 105.0 19"><path d="M0.5 19.2 L12.4 2.2 Q13.6 0.5 15.8 0.5 H89.2 Q91.4 0.5 92.6 2.2 L104.5 19.2" fill="url(#tg)" stroke="#9c9c9c" stroke-width="1"/></svg>
<svg style="left:1553.5px;top:208px" width="78.5" height="19" viewBox="0 0 78.5 19"><path d="M0.5 19.2 L12.4 2.2 Q13.6 0.5 15.8 0.5 H62.7 Q64.9 0.5 66.1 2.2 L78.0 19.2" fill="url(#tg)" stroke="#9c9c9c" stroke-width="1"/></svg>
<svg style="left:1482.3px;top:208px" width="87.3" height="19" viewBox="0 0 87.3 19"><path d="M0.5 19.2 L12.4 2.2 Q13.6 0.5 15.8 0.5 H71.5 Q73.7 0.5 74.9 2.2 L86.8 19.2" fill="url(#tg)" stroke="#9c9c9c" stroke-width="1"/></svg>
<svg style="left:1418.0px;top:208px" width="79.4" height="19" viewBox="0 0 79.4 19"><path d="M0.5 19.2 L12.4 2.2 Q13.6 0.5 15.8 0.5 H63.6 Q65.8 0.5 67.0 2.2 L78.9 19.2" fill="url(#tg)" stroke="#9c9c9c" stroke-width="1"/></svg>
<svg style="left:1337.2px;top:208px" width="95.2" height="19" viewBox="0 0 95.2 19"><path d="M0.5 19.2 L12.4 2.2 Q13.6 0.5 15.8 0.5 H79.4 Q81.6 0.5 82.8 2.2 L94.7 19.2" fill="url(#tg)" stroke="#9c9c9c" stroke-width="1"/></svg>
<svg style="left:1267.0px;top:208px" width="84.6" height="19" viewBox="0 0 84.6 19"><path d="M0.5 19.2 L12.4 2.2 Q13.6 0.5 15.8 0.5 H68.8 Q71.0 0.5 72.2 2.2 L84.1 19.2" fill="url(#tg)" stroke="#9c9c9c" stroke-width="1"/></svg>
<svg style="left:1175.4px;top:208px" width="106.6" height="20" viewBox="0 0 106.6 20"><path d="M0.5 20 L12.4 2.2 Q13.6 0.5 15.8 0.5 H90.8 Q93.0 0.5 94.2 2.2 L106.1 20" fill="#f8f8f8" stroke="#9c9c9c" stroke-width="1"/></svg>
<svg width="0" height="0"><defs><linearGradient id="tg" x1="0" y1="0" x2="0" y2="1"><stop offset="0" stop-color="#f4f4f4"/><stop offset="1" stop-color="#fbfbfb"/></linearGradient></defs></svg>
<svg style="left:1187px;top:210px" width="14" height="15" viewBox="0 0 14 15"><path d="M4 1H9L12 4V12H4Z" fill="#f2ead6" stroke="#b0a890" stroke-width="0.8"/><path d="M1 4H6L9 7V14.5H1Z" fill="#f7f0dc" stroke="#b0a890" stroke-width="0.8"/></svg>
<div class="gb a" style="left:1205px;top:210px">Généralités</div>
<svg style="left:1280px;top:210px" width="15" height="14" viewBox="0 0 15 14"><rect x="1" y="1" width="10" height="11" rx="1.5" fill="#d8262a"/><rect x="2.5" y="2.5" width="7" height="3" fill="#444"/><rect x="10" y="6" width="4" height="6" fill="#b01e22"/><circle cx="4" cy="12.5" r="1.5" fill="#333"/><circle cx="11" cy="12.5" r="1.5" fill="#333"/></svg>
<div class="g a" style="left:1298px;top:210px">Livraison</div>
<svg style="left:1352px;top:210px" width="14" height="15" viewBox="0 0 14 15"><rect x="1" y="1" width="9" height="12" fill="#e6e6e6" stroke="#aaa" stroke-width="0.8"/><rect x="5" y="5" width="8" height="9" fill="#d0d0d0" stroke="#999" stroke-width="0.8"/><rect x="6.5" y="6.5" width="5" height="2" fill="#8a8"/></svg>
<div class="g a" style="left:1369px;top:210px">Facturation</div>
<div class="a" style="left:1432px;top:208px;font:bold 16px/18px 'Liberation Sans',sans-serif;color:#6a9a20;-webkit-text-stroke:0.6px #3e6a10">$</div>
<div class="g a" style="left:1449px;top:210px">Encours</div>
<svg style="left:1498px;top:210px" width="16" height="15" viewBox="0 0 16 15"><circle cx="5" cy="5" r="3" fill="#f0c060"/><circle cx="11" cy="4" r="3" fill="#d8a070"/><path d="M0.5 14 Q0.5 8 5 8 Q9 8 9 14Z" fill="#a080d0"/><path d="M7 14 Q7 7.5 11 7.5 Q15.5 7.5 15.5 14Z" fill="#d0d0e8"/><circle cx="8" cy="9" r="2.5" fill="#f0c080"/><path d="M4.5 15 Q4.5 11.5 8 11.5 Q11.5 11.5 11.5 15Z" fill="#6aa8e0"/></svg>
<div class="g a" style="left:1515px;top:210px">Contacts</div>
<svg style="left:1570px;top:212px" width="13" height="11" viewBox="0 0 13 11"><path d="M1 5.5 L4.5 9 L12 1.5" fill="none" stroke="#2aa7b3" stroke-width="2.4"/></svg>
<svg style="left:1719px;top:212px" width="13" height="11" viewBox="0 0 13 11"><path d="M1 5.5 L4.5 9 L12 1.5" fill="none" stroke="#2aa7b3" stroke-width="2.4"/></svg>
<div class="g a" style="left:1586px;top:210px">Actions</div>
<svg style="left:1632px;top:210px" width="15" height="14" viewBox="0 0 15 14"><path d="M1 8 L9 2 L14 6 L6 12Z" fill="#9ed08a"/><path d="M3 7 L10 2 L13 4 L6 10Z" fill="#f0d060"/></svg>
<div class="g a" style="left:1649px;top:210px">Opportunités</div>
<div class="g a" style="left:1736px;top:210px">Qui, quand ?</div>
<div class="a" style="left:1177px;top:232px;width:580px;height:25px;background:#00a6b4"></div>
<div class="t" style="left:1209px;top:242px;font:bold 12px/12px 'Liberation Sans',sans-serif;color:#fff;transform:scaleX(.92);transform-origin:0 0">DONNEES</div>
<div class="t" style="left:1580px;top:241px;font:bold 12px/12px 'Liberation Sans',sans-serif;color:#fff;transform:scaleX(.92);transform-origin:0 0">CLASSIFICATION</div>
<div class="g gr a" style="left:1063px;top:270px;width:200px;text-align:right;color:#000">Réseau</div>
<div class="a" style="left:1271px;top:268px;width:90px;height:20px;background:#e8edf9"></div><div class="gb a" style="left:1274px;top:270px">0</div>
<div class="a" style="left:1364px;top:270px;width:14px;height:14px;background:#fff;border:1px solid #9a9a9a;font:bold 11px/12px 'Liberation Sans',sans-serif;text-align:center;color:#000">?</div>
<div class="g gr a" style="left:1063px;top:295px;width:200px;text-align:right;color:#000">Client</div>
<div class="a" style="left:1271px;top:293px;width:90px;height:20px;background:#e8edf9"></div><div class="gb a" style="left:1274px;top:295px">000001</div>
<div class="g gr a" style="left:1063px;top:320px;width:200px;text-align:right;color:#000">Raison sociale</div>
<div class="a" style="left:1271px;top:318px;width:240px;height:20px;background:#e8edf9"></div><div class="gb a" style="left:1274px;top:320px">BIGMAT BLOIS</div>
<div class="g a" style="left:1384px;top:270px">Réseau GénéralDocuments liés ?</div>
<div class="a" style="left:1552px;top:271px;width:10px;height:10px;border:1px solid #c8c8c8;background:#fff"></div>
<div class="g gr a" style="left:1063px;top:344px;width:200px;text-align:right;color:#000">Facturation</div>
<div class="a" style="left:1271px;top:345px;width:11px;height:11px;background:#eaeef6;border:1px solid #c8d0dc"></div>
<svg style="left:1272px;top:346px" width="9" height="9" viewBox="0 0 9 9"><path d="M1.5 4.5L3.5 6.5L7.5 2" fill="none" stroke="#a8a8a8" stroke-width="1.1"/></svg>
<div class="g gr a" style="left:1173px;top:344px;width:200px;text-align:right;color:#000">Livraison</div>
<div class="a" style="left:1381px;top:345px;width:11px;height:11px;background:#fff;border:1px solid #d8d8d8"></div>
<svg style="left:1382px;top:346px" width="9" height="9" viewBox="0 0 9 9"><path d="M1.5 4.5L3.5 6.5L7.5 2" fill="none" stroke="#a8a8a8" stroke-width="1.1"/></svg>
<div class="g gr a" style="left:1063px;top:366px;width:200px;text-align:right;color:#000">Client facturé</div>
<div class="a" style="left:1271px;top:365px;width:90px;height:20px;background:#e8edf9"></div>
<div class="a" style="left:1364px;top:366px;width:14px;height:14px;background:#fff;border:1px solid #9a9a9a;font:bold 11px/12px 'Liberation Sans',sans-serif;text-align:center;color:#000">?</div>
<div class="g gr a" style="left:1063px;top:391px;width:200px;text-align:right;color:#000">Type blocage</div>
<div class="a" style="left:1271px;top:390px;width:90px;height:20px;background:#e8edf9"></div>
<div class="a" style="left:1364px;top:391px;width:14px;height:14px;background:#fff;border:1px solid #9a9a9a;font:bold 11px/12px 'Liberation Sans',sans-serif;text-align:center;color:#000">?</div>
<div class="g gr a" style="left:1063px;top:416px;width:200px;text-align:right;color:#000">Motif</div>
<div class="a" style="left:1270px;top:415px;width:241px;height:98px;background:#e8edf9;border:1px solid #646464"></div>
<div class="a" style="left:1491px;top:416px;width:19px;height:96px;background:#f0f0f0"></div>
<svg style="left:1495px;top:421px" width="10" height="6" viewBox="0 0 10 6"><path d="M1 5L5 1L9 5" fill="none" stroke="#a0a0a0" stroke-width="1.2"/></svg>
<svg style="left:1495px;top:501px" width="10" height="6" viewBox="0 0 10 6"><path d="M1 1L5 5L9 1" fill="none" stroke="#a0a0a0" stroke-width="1.2"/></svg>
<div class="g gr a" style="left:1408px;top:270px;width:200px;text-align:right;color:#000">Groupe</div>
<div class="a" style="left:1616px;top:268px;width:110px;height:20px;background:#e8edf9"></div><div class="gb a" style="left:1619px;top:270px">000001</div>
<div class="a" style="left:1729px;top:269px;width:14px;height:14px;background:#fff;border:1px solid #9a9a9a;font:bold 11px/12px 'Liberation Sans',sans-serif;text-align:center;color:#000">?</div>
<div class="g gr a" style="left:1408px;top:295px;width:200px;text-align:right;color:#000">Forme juridique</div>
<div class="a" style="left:1616px;top:293px;width:110px;height:20px;background:#e8edf9"></div><div class="gb a" style="left:1619px;top:295px">EURL</div>
<div class="a" style="left:1729px;top:294px;width:14px;height:14px;background:#fff;border:1px solid #9a9a9a;font:bold 11px/12px 'Liberation Sans',sans-serif;text-align:center;color:#000">?</div>
<div class="g a" style="left:1749px;top:295px">Entreprise Unipers. à Resp. Limitée</div>
<div class="g gr a" style="left:1408px;top:320px;width:200px;text-align:right;color:#000">Code SIRET</div>
<div class="a" style="left:1616px;top:318px;width:110px;height:20px;background:#e8edf9"></div>
<div class="g gr a" style="left:1408px;top:345px;width:200px;text-align:right;color:#000">Numéro SIREN</div>
<div class="a" style="left:1616px;top:343px;width:110px;height:20px;background:#e8edf9"></div>
<div class="g gr a" style="left:1408px;top:370px;width:200px;text-align:right;color:#000">Code NAF</div>
<div class="a" style="left:1616px;top:368px;width:110px;height:20px;background:#e8edf9"></div><div class="gb a" style="left:1619px;top:370px">0115Z</div>
<div class="a" style="left:1729px;top:369px;width:14px;height:14px;background:#fff;border:1px solid #9a9a9a;font:bold 11px/12px 'Liberation Sans',sans-serif;text-align:center;color:#000">?</div>
<div class="g gr a" style="left:1408px;top:395px;width:200px;text-align:right;color:#000">Commercial</div>
<div class="a" style="left:1616px;top:393px;width:110px;height:20px;background:#e8edf9"></div><div class="gb a" style="left:1619px;top:395px">NORD</div>
<div class="a" style="left:1729px;top:394px;width:14px;height:14px;background:#fff;border:1px solid #9a9a9a;font:bold 11px/12px 'Liberation Sans',sans-serif;text-align:center;color:#000">?</div>
<div class="g a" style="left:1749px;top:395px">Paul PATRICK</div>
<div class="g gr a" style="left:1408px;top:420px;width:200px;text-align:right;color:#000">Famille</div>
<div class="a" style="left:1616px;top:418px;width:110px;height:20px;background:#e8edf9"></div><div class="gb a" style="left:1619px;top:420px">Pro</div>
<div class="a" style="left:1729px;top:419px;width:14px;height:14px;background:#fff;border:1px solid #9a9a9a;font:bold 11px/12px 'Liberation Sans',sans-serif;text-align:center;color:#000">?</div>
<div class="g a" style="left:1749px;top:420px">Professionnel</div>
<div class="g gr a" style="left:1408px;top:445px;width:200px;text-align:right;color:#000">Secteur activité</div>
<div class="a" style="left:1616px;top:443px;width:110px;height:20px;background:#e8edf9"></div><div class="gb a" style="left:1619px;top:445px">07</div>
<div class="a" style="left:1729px;top:444px;width:14px;height:14px;background:#fff;border:1px solid #9a9a9a;font:bold 11px/12px 'Liberation Sans',sans-serif;text-align:center;color:#000">?</div>
<div class="g a" style="left:1749px;top:445px">Menuiserie</div>
<div class="g gr a" style="left:1408px;top:470px;width:200px;text-align:right;color:#000">Domaine activité</div>
<div class="a" style="left:1616px;top:468px;width:110px;height:20px;background:#e8edf9"></div>
<div class="g gr a" style="left:1408px;top:495px;width:200px;text-align:right;color:#000">Indice confiance</div>
<div class="a" style="left:1616px;top:493px;width:110px;height:20px;background:#e8edf9"></div><div class="gb a" style="left:1619px;top:495px">001</div>
<div class="a" style="left:1729px;top:494px;width:14px;height:14px;background:#fff;border:1px solid #9a9a9a;font:bold 11px/12px 'Liberation Sans',sans-serif;text-align:center;color:#000">?</div>
<div class="g a" style="left:1749px;top:495px">AAA</div>
<div class="a" style="left:1750px;top:269px;width:14px;height:14px;background:#cdcdcd;border:1px solid #c0c0c0"></div>
<div class="g gr a" style="left:1062px;top:520px;width:200px;text-align:right;color:#000">Commentaire ext</div>
<div class="a" style="left:1270px;top:518px;width:455px;height:64px;background:#e8edf9;border:1px solid #646464"></div>
<div class="a" style="left:1706px;top:519px;width:18px;height:62px;background:#f0f0f0"></div>
<svg style="left:1710px;top:524px" width="10" height="6" viewBox="0 0 10 6"><path d="M1 5L5 1L9 5" fill="none" stroke="#a0a0a0" stroke-width="1.2"/></svg>
<svg style="left:1710px;top:570px" width="10" height="6" viewBox="0 0 10 6"><path d="M1 1L5 5L9 1" fill="none" stroke="#a0a0a0" stroke-width="1.2"/></svg>
<div class="gb a" style="left:1274px;top:519px;font-size:11.7px">Commentaire externe du client</div>
<div class="g gr a" style="left:1062px;top:590px;width:200px;text-align:right;color:#000">Commentaire int</div>
<div class="a" style="left:1270px;top:588px;width:455px;height:64px;background:#e8edf9;border:1px solid #646464"></div>
<div class="a" style="left:1706px;top:589px;width:18px;height:62px;background:#f0f0f0"></div>
<svg style="left:1710px;top:594px" width="10" height="6" viewBox="0 0 10 6"><path d="M1 5L5 1L9 5" fill="none" stroke="#a0a0a0" stroke-width="1.2"/></svg>
<svg style="left:1710px;top:640px" width="10" height="6" viewBox="0 0 10 6"><path d="M1 1L5 5L9 1" fill="none" stroke="#a0a0a0" stroke-width="1.2"/></svg>
<div class="gb a" style="left:1274px;top:589px;font-size:11.7px">Commentaire interne du client</div>
<div class="a" style="left:1177px;top:663px;width:580px;height:25px;background:#00a6b4"></div>
<div class="t" style="left:1209px;top:672px;font:bold 12px/12px 'Liberation Sans',sans-serif;color:#fff;transform:scaleX(.93);transform-origin:0 0">ADRESSE PRINCIPALE</div>
<div class="g gr a" style="left:1060px;top:694px;width:200px;text-align:right;color:#000">Correspondant</div>
<div class="a" style="left:1268px;top:693px;width:200px;height:19px;background:#e8edf9"></div>
<div class="g gr a" style="left:1345px;top:694px;width:200px;text-align:right;color:#000">Contact</div>
<div class="a" style="left:1553px;top:693px;width:170px;height:19px;background:#e8edf9"></div>
<div class="g gr a" style="left:1060px;top:719px;width:200px;text-align:right;color:#000">Adresse</div>
<div class="a" style="left:1268px;top:718px;width:455px;height:18px;background:#e8edf9"></div><div class="gb a" style="left:1271px;top:720px">5 BLD DE L'INDUSTRIE</div>
<div class="a" style="left:1268px;top:737px;width:455px;height:18px;background:#e8edf9"></div><div class="gb a" style="left:1271px;top:739px">Complément adresse</div>
<div class="a" style="left:1268px;top:756px;width:455px;height:18px;background:#e8edf9"></div><div class="gb a" style="left:1271px;top:758px">Complément adresse bis</div>
<div class="g gr a" style="left:1060px;top:782px;width:200px;text-align:right;color:#000">Code postal</div>
<div class="a" style="left:1268px;top:780px;width:200px;height:20px;background:#e8edf9"></div><div class="gb a" style="left:1271px;top:782px">01120</div>
<div class="a" style="left:1471px;top:781px;width:14px;height:14px;background:#fff;border:1px solid #9a9a9a;font:bold 11px/12px 'Liberation Sans',sans-serif;text-align:center;color:#000">?</div>
<div class="g gr a" style="left:1345px;top:782px;width:200px;text-align:right;color:#000">Ville</div>
<div class="a" style="left:1553px;top:780px;width:170px;height:20px;background:#e8edf9"></div><div class="gb a" style="left:1556px;top:782px">MONTLUEL</div>
<div class="a" style="left:1726px;top:781px;width:14px;height:14px;background:#fff;border:1px solid #9a9a9a;font:bold 11px/12px 'Liberation Sans',sans-serif;text-align:center;color:#000">?</div>
<div class="g gr a" style="left:1060px;top:807px;width:200px;text-align:right;color:#000">Pays</div>
<div class="a" style="left:1268px;top:805px;width:200px;height:20px;background:#e8edf9"></div><div class="gb a" style="left:1271px;top:807px">FR</div>
<div class="a" style="left:1471px;top:806px;width:14px;height:14px;background:#fff;border:1px solid #9a9a9a;font:bold 11px/12px 'Liberation Sans',sans-serif;text-align:center;color:#000">?</div>
<div class="g gr a" style="left:1060px;top:832px;width:200px;text-align:right;color:#000">Téléphone</div>
<div class="a" style="left:1268px;top:830px;width:200px;height:20px;background:#e8edf9"></div><div class="gb a" style="left:1271px;top:832px">05 63 40 50 60</div>
<div class="a" style="left:1471px;top:831px;width:14px;height:14px;background:#fff;border:1px solid #9a9a9a;font:bold 11px/12px 'Liberation Sans',sans-serif;text-align:center;color:#000">?</div>
<div class="g gr a" style="left:1345px;top:832px;width:200px;text-align:right;color:#000">Portable</div>
<div class="a" style="left:1553px;top:830px;width:170px;height:20px;background:#e8edf9"></div><div class="gb a" style="left:1556px;top:832px">06 10 56 91 01</div>
<div class="a" style="left:1726px;top:831px;width:14px;height:14px;background:#fff;border:1px solid #9a9a9a;font:bold 11px/12px 'Liberation Sans',sans-serif;text-align:center;color:#000">?</div>
<div class="g gr a" style="left:1060px;top:857px;width:200px;text-align:right;color:#000">E.Mail</div>
<div class="g gr a" style="left:1345px;top:857px;width:200px;text-align:right;color:#000">Fax</div>
<div class="a" style="left:1553px;top:855px;width:170px;height:20px;background:#e8edf9"></div><div class="gb a" style="left:1556px;top:857px">02 54 42 55 87</div>
<div class="a" style="left:1726px;top:856px;width:14px;height:14px;background:#fff;border:1px solid #9a9a9a;font:bold 11px/12px 'Liberation Sans',sans-serif;text-align:center;color:#000">?</div>
<div class="a" style="left:1267px;top:854px;width:201px;height:21px;background:#e8edf9;border:1px solid #646464"></div>
<div class="gb a" style="left:1271px;top:857px;width:180px;overflow:hidden">test@test.fr,fhoubert@elcia.co</div>
<svg style="left:1452px;top:857px" width="10" height="15" viewBox="0 0 10 15"><path d="M2 5L5 2L8 5M2 10L5 13L8 10" fill="none" stroke="#333" stroke-width="1.2"/></svg>
<div class="a" style="left:1173px;top:971px;width:747px;height:21px;background:#f0f0f0"></div>
<div class="a" style="left:1193px;top:971px;width:647px;height:15px;background:#cdcdcd"></div>
<svg style="left:1180px;top:974px" width="8" height="10" viewBox="0 0 8 10"><path d="M6 1L2 5L6 9" fill="none" stroke="#505050" stroke-width="1.8"/></svg>
<svg style="left:1910px;top:974px" width="8" height="10" viewBox="0 0 8 10"><path d="M2 1L6 5L2 9" fill="none" stroke="#505050" stroke-width="1.8"/></svg>
<div class="a" style="left:1177px;top:999px;width:80px;height:20px;background:#cccccc;border:1px solid #bcbcbc"></div>
<div class="g a" style="left:1203px;top:1001px;color:#6d6d6d;transform:scaleX(.9)">Validation</div>
<svg style="left:1187px;top:1004px" width="12" height="10" viewBox="0 0 12 10"><path d="M1 5L4.5 8.5L11 1.5" fill="none" stroke="#b8b8b8" stroke-width="2"/></svg>
<div class="a" style="left:1261px;top:999px;width:80px;height:20px;background:#cccccc;border:1px solid #bcbcbc"></div>
<div class="g a" style="left:1272px;top:1001px;color:#6d6d6d;transform:scaleX(.9)">Sauvegarde</div>
<div class="a" style="left:1345px;top:999px;width:80px;height:20px;background:#cccccc;border:1px solid #bcbcbc"></div>
<div class="g a" style="left:1373px;top:1001px;color:#6d6d6d;transform:scaleX(.9)">Abandon</div>
<svg style="left:1355px;top:1003px" width="12" height="12" viewBox="0 0 12 12"><path d="M1.5 1.5L10.5 10.5M10.5 1.5L1.5 10.5" stroke="#a8a8a8" stroke-width="2.4"/></svg>
<div class="a" style="left:8px;top:1024px;width:1912px;height:25px;background:#fff"></div><div class="a" style="left:8px;top:1025px;width:1912px;height:23px;background:#ebf0f4"></div><svg style="left:1909px;top:1030px" width="11" height="12"><g fill="#5b8fd6"><rect x="1" y="9" width="2" height="2"/><rect x="5" y="9" width="2" height="2"/><rect x="9" y="9" width="2" height="2"/><rect x="5" y="5" width="2" height="2"/><rect x="9" y="5" width="2" height="2"/><rect x="9" y="1" width="2" height="2"/></g></svg>
</body></html>
